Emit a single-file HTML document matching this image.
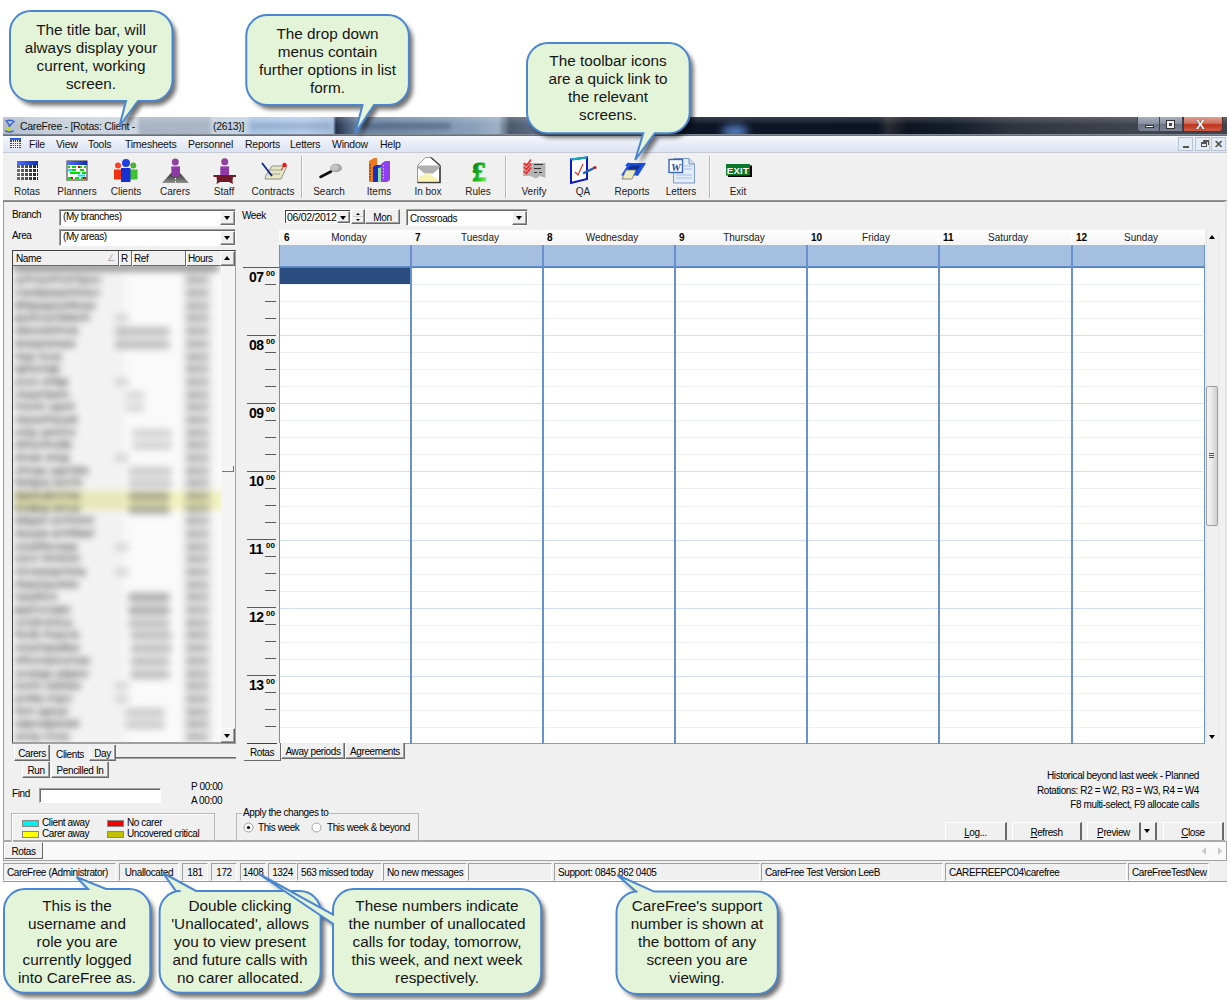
<!DOCTYPE html><html><head><meta charset="utf-8"><style>
*{margin:0;padding:0;box-sizing:border-box}
html,body{width:1230px;height:1000px;overflow:hidden;background:#fff;font-family:"Liberation Sans",sans-serif;font-size:10px;color:#000;letter-spacing:-0.4px}
.a{position:absolute}
.t{position:absolute;white-space:nowrap;line-height:1}
.combo{position:absolute;background:#fff;border:1px solid;border-color:#a0a0a0 #fff #fff #a0a0a0;box-shadow:inset 1px 1px 0 #696969}
.cb{position:absolute;top:1px;right:0;bottom:0;width:15px;background:#f0f0f0;border:1px solid;border-color:#fff #696969 #696969 #fff;box-shadow:inset -1px -1px 0 #a0a0a0}
.dn{position:absolute;left:3px;top:4px;width:0;height:0;border-left:3.5px solid transparent;border-right:3.5px solid transparent;border-top:4px solid #000}
.up{position:absolute;width:0;height:0;border-left:3.5px solid transparent;border-right:3.5px solid transparent;border-bottom:4px solid #000}
.btn{position:absolute;background:#f0f0f0;border:1px solid;border-color:#fff #696969 #696969 #fff;box-shadow:inset -1px -1px 0 #a0a0a0}
.sb{position:absolute;top:0;height:19px;border:1px solid;border-color:#a0a0a0 #fff #fff #a0a0a0;padding:4px 0 0 3px;white-space:nowrap;overflow:hidden}
.tab{position:absolute;background:#f0f0f0;border:1px solid;border-color:#fff #696969 #696969 #fff;border-top:none;box-shadow:inset -1px -1px 0 #a0a0a0;text-align:center;white-space:nowrap}
.ct{position:absolute;text-align:center;font-size:15.3px;line-height:17.95px;color:#151515;white-space:nowrap;letter-spacing:0}
</style></head><body>
<div class="a" style="left:3px;top:117px;width:1224px;height:18px;overflow:hidden;background:linear-gradient(90deg,#b0bccb 0,#c6d0db 45px,#cdd6e0 133px,#a9b5c5 138px,#aab6c6 205px,#c6d1dd 210px,#c2d2e6 243px,#a8c4e6 250px,#b4cdec 300px,#a4bcdc 330px,#26324a 333px,#3a4c68 340px,#6c84a2 356px,#7a92ae 420px,#8aa0ba 470px,#9cb0c6 495px,#4a586c 507px,#5c6c84 530px,#4e5c72 590px,#3a465a 640px,#1a2438 670px,#0c1526 690px,#0c1424 875px,#2a2c34 885px,#0e1420 905px,#141c2a 950px,#30343e 1010px,#3a3e48 1080px,#40444e 1134px)"></div>
<div class="a" style="left:3px;top:117px;width:1224px;height:8px;background:linear-gradient(rgba(255,255,255,.18),rgba(255,255,255,0))"></div>
<div class="a" style="left:722px;top:125px;width:26px;height:14px;border-radius:50%;background:#5a88d0;filter:blur(4px);opacity:.9"></div>
<div class="a" style="left:3px;top:134px;width:1224px;height:2px;background:linear-gradient(#8a949e,#5e666f)"></div>
<svg class="a" style="left:0;top:112px" width="20" height="24" viewBox="0 112 20 24"><path d="M5.5 121.5 Q10 119 14.8 121.8" stroke="#3a62c8" stroke-width="1.5" fill="none"/><path d="M13.2 122 Q10 125 7.5 129.5 M7.2 122 Q8.5 124 9.5 126" stroke="#3a62c8" stroke-width="1.4" fill="none"/><path d="M5 130.5 Q9 133.5 13.5 130.8" stroke="#3a62c8" stroke-width="1.5" fill="none"/><ellipse cx="8.6" cy="129" rx="2.1" ry="2.2" fill="#c4d820"/></svg>
<div class="t" style="left:20px;top:121px;font-size:10.5px;color:#111;letter-spacing:-0.3px">CareFree - [Rotas: Client -</div>
<div class="t" style="left:213px;top:121px;font-size:10.5px;color:#111;letter-spacing:-0.3px">(2613)]</div>
<div class="a" style="left:250px;top:123px;width:80px;height:6px;background:#8aa0bc;filter:blur(2px);opacity:.6"></div>
<div class="a" style="left:360px;top:123px;width:90px;height:6px;background:#485a74;filter:blur(2px);opacity:.6"></div>
<div class="a" style="left:1137px;top:117px;width:23px;height:15px;border:1px solid #3c4450;border-top:none;border-radius:0 0 0 4px;background:linear-gradient(#a8b0bc,#8890a0 50%,#6a7282 51%,#7a8496)"></div>
<div class="a" style="left:1145px;top:125px;width:9px;height:3px;background:#fff;border:1px solid #333"></div>
<div class="a" style="left:1160px;top:117px;width:23px;height:15px;border:1px solid #3c4450;border-top:none;border-left:none;background:linear-gradient(#a8b0bc,#8890a0 50%,#6a7282 51%,#7a8496)"></div>
<div class="a" style="left:1166px;top:120px;width:9px;height:9px;background:#eee;border:1px solid #333"><div class="a" style="left:2px;top:2px;width:3px;height:3px;background:#444"></div></div>
<div class="a" style="left:1183px;top:117px;width:40px;height:15px;border:1px solid #50302c;border-top:none;border-radius:0 0 4px 0;background:linear-gradient(#e0a090,#d07060 45%,#c0301c 55%,#d06048)"></div>
<div class="t" style="left:1196px;top:118px;font-size:13px;font-weight:bold;color:#fff;text-shadow:0 0 1px #000">X</div>
<div class="a" style="left:3px;top:136px;width:1224px;height:16px;background:linear-gradient(#f4f6fc,#dde3f3)"></div>
<div class="a" style="left:3px;top:152px;width:1224px;height:1px;background:#c5cad3"></div>
<svg class="a" style="left:10px;top:138px" width="11" height="10"><rect x="0" y="0" width="11" height="10" fill="#444"/><rect x="0" y="0" width="11" height="2" fill="#2a5af0"/><path d="M0 4.5H11M0 6.5H11M0 8.5H11M2.5 2V10M4.5 2V10M6.5 2V10M8.5 2V10" stroke="#eee" stroke-width="1"/></svg>
<div class="t" style="left:29px;top:139px;font-size:10.5px;letter-spacing:-0.25px;color:#111">File</div>
<div class="t" style="left:56px;top:139px;font-size:10.5px;letter-spacing:-0.25px;color:#111">View</div>
<div class="t" style="left:88px;top:139px;font-size:10.5px;letter-spacing:-0.25px;color:#111">Tools</div>
<div class="t" style="left:125px;top:139px;font-size:10.5px;letter-spacing:-0.25px;color:#111">Timesheets</div>
<div class="t" style="left:188px;top:139px;font-size:10.5px;letter-spacing:-0.25px;color:#111">Personnel</div>
<div class="t" style="left:245px;top:139px;font-size:10.5px;letter-spacing:-0.25px;color:#111">Reports</div>
<div class="t" style="left:290px;top:139px;font-size:10.5px;letter-spacing:-0.25px;color:#111">Letters</div>
<div class="t" style="left:332px;top:139px;font-size:10.5px;letter-spacing:-0.25px;color:#111">Window</div>
<div class="t" style="left:380px;top:139px;font-size:10.5px;letter-spacing:-0.25px;color:#111">Help</div>
<div class="a" style="left:1178px;top:137px;width:15px;height:14px;background:#e4ecf6;border:1px solid #b8c4d4"></div>
<div class="a" style="left:1195px;top:137px;width:15px;height:14px;background:#e4ecf6;border:1px solid #b8c4d4"></div>
<div class="a" style="left:1211px;top:137px;width:15px;height:14px;background:#e4ecf6;border:1px solid #b8c4d4"></div>
<div class="a" style="left:1183px;top:146px;width:6px;height:2px;background:#555"></div>
<div class="a" style="left:1201px;top:142px;width:6px;height:5px;border:1px solid #555;border-top-width:2px"></div><div class="a" style="left:1203px;top:140px;width:6px;height:5px;border-top:2px solid #555;border-right:1px solid #555"></div>
<div class="t" style="left:1214px;top:139px;font-size:11px;font-weight:bold;color:#555">&#x2715;</div>
<div class="a" style="left:3px;top:153px;width:1224px;height:47px;background:#f0f0f0"></div>
<div class="a" style="left:3px;top:200px;width:1224px;height:2px;background:linear-gradient(#9a9a9a,#7c7c7c)"></div>
<div class="t" style="left:-13px;width:80px;text-align:center;top:187px;font-size:10px;color:#222;letter-spacing:0">Rotas</div>
<div class="t" style="left:37px;width:80px;text-align:center;top:187px;font-size:10px;color:#222;letter-spacing:0">Planners</div>
<div class="t" style="left:86px;width:80px;text-align:center;top:187px;font-size:10px;color:#222;letter-spacing:0">Clients</div>
<div class="t" style="left:135px;width:80px;text-align:center;top:187px;font-size:10px;color:#222;letter-spacing:0">Carers</div>
<div class="t" style="left:184px;width:80px;text-align:center;top:187px;font-size:10px;color:#222;letter-spacing:0">Staff</div>
<div class="t" style="left:233px;width:80px;text-align:center;top:187px;font-size:10px;color:#222;letter-spacing:0">Contracts</div>
<div class="t" style="left:289px;width:80px;text-align:center;top:187px;font-size:10px;color:#222;letter-spacing:0">Search</div>
<div class="t" style="left:339px;width:80px;text-align:center;top:187px;font-size:10px;color:#222;letter-spacing:0">Items</div>
<div class="t" style="left:388px;width:80px;text-align:center;top:187px;font-size:10px;color:#222;letter-spacing:0">In box</div>
<div class="t" style="left:438px;width:80px;text-align:center;top:187px;font-size:10px;color:#222;letter-spacing:0">Rules</div>
<div class="t" style="left:494px;width:80px;text-align:center;top:187px;font-size:10px;color:#222;letter-spacing:0">Verify</div>
<div class="t" style="left:543px;width:80px;text-align:center;top:187px;font-size:10px;color:#222;letter-spacing:0">QA</div>
<div class="t" style="left:592px;width:80px;text-align:center;top:187px;font-size:10px;color:#222;letter-spacing:0">Reports</div>
<div class="t" style="left:641px;width:80px;text-align:center;top:187px;font-size:10px;color:#222;letter-spacing:0">Letters</div>
<div class="t" style="left:698px;width:80px;text-align:center;top:187px;font-size:10px;color:#222;letter-spacing:0">Exit</div>
<div class="a" style="left:301px;top:156px;width:1px;height:42px;background:#b4b4b4"></div>
<div class="a" style="left:302px;top:156px;width:1px;height:42px;background:#fff"></div>
<div class="a" style="left:505px;top:156px;width:1px;height:42px;background:#b4b4b4"></div>
<div class="a" style="left:506px;top:156px;width:1px;height:42px;background:#fff"></div>
<div class="a" style="left:709px;top:156px;width:1px;height:42px;background:#b4b4b4"></div>
<div class="a" style="left:710px;top:156px;width:1px;height:42px;background:#fff"></div>
<svg class="a" style="left:0;top:150px" width="800" height="40" viewBox="0 150 800 40">
<defs>
<linearGradient id="gbl" x1="0" x2="1"><stop offset="0" stop-color="#5070ff"/><stop offset="1" stop-color="#1030b0"/></linearGradient>
<linearGradient id="ggr" x1="0" x2="1"><stop offset="0" stop-color="#707070"/><stop offset="1" stop-color="#202020"/></linearGradient>
<linearGradient id="groad" x1="0" y1="0" x2="0" y2="1"><stop offset="0" stop-color="#303030"/><stop offset="1" stop-color="#909090"/></linearGradient>
<linearGradient id="gpound" x1="0" y1="0" x2="1" y2="1"><stop offset="0" stop-color="#006010"/><stop offset=".6" stop-color="#20c020"/><stop offset="1" stop-color="#a0ff60"/></linearGradient>
</defs>
<!-- Rotas -->
<rect x="17" y="161" width="21" height="19" fill="url(#ggr)"/>
<rect x="17" y="161" width="21" height="4" fill="url(#gbl)"/>
<g stroke="#fff" stroke-width="1">
<path d="M17 168.5H38M17 172.5H38M17 176.5H38M20.5 165V180M24.5 165V180M28.5 165V180M32.5 165V180M36.5 165V180"/>
</g>
<!-- Planners -->
<rect x="67" y="161" width="20" height="19" fill="#fff" stroke="#333" stroke-width="1"/>
<rect x="67" y="161" width="20" height="4" fill="url(#gbl)"/>
<g stroke-width="2.2">
<path d="M68 167H70M72 167H76M80 167H82M84 167H86M72 170H76M80 170H84M70 173H80M82 173H86M68 178H71M75 178H79M81 178H83" stroke="#00e000"/>
<path d="M68 170H72M78 175.5H85" stroke="#10e0f0"/>
<path d="M78 167H80M71 178H73M83 178H86" stroke="#e00000"/>
</g>
<!-- Clients -->
<circle cx="118" cy="165.5" r="3" fill="#ff4020"/>
<rect x="114" y="169.5" width="7.5" height="10" fill="#f03010"/>
<circle cx="133.3" cy="165.5" r="3" fill="#50b030"/>
<rect x="130" y="169.5" width="7.5" height="10" fill="#40c030"/>
<circle cx="126" cy="163" r="4" fill="#2040e0"/>
<rect x="121" y="168" width="9.5" height="14" fill="#1830d0"/>
<!-- Carers -->
<path d="M162 183 L171 173 L180 173 L189 183 Z" fill="url(#groad)"/>
<circle cx="175.3" cy="162" r="3.5" fill="#9040a0"/>
<rect x="171.3" y="166.4" width="8.7" height="10" fill="#9038a8"/>
<path d="M175.5 178V179.5M175.5 181V182.5" stroke="#fff" stroke-width="1"/>
<!-- Staff -->
<circle cx="224.7" cy="161.7" r="3.5" fill="#9040a0"/>
<rect x="220.3" y="166.4" width="8.7" height="9" fill="#9038a8"/>
<path d="M213.5 175H236V177H233Q232 181 233 184L229 182H220L216.5 184Q217.5 181 216.5 177H213.5Z" fill="#701a28"/>
<!-- Contracts -->
<path d="M266 175 L272 166 L287 166 L281 179 L265 179Z" fill="#e8e8c0" stroke="#909090" stroke-width="1"/>
<path d="M270 170H283M268 174H280" stroke="#a0a0a0" stroke-width="1.2"/>
<path d="M262 163 L272 176" stroke="#102880" stroke-width="1.8"/>
<circle cx="284.5" cy="165" r="2.2" fill="#ff1010"/>
<path d="M284 166 L281 170" stroke="#c02020" stroke-width="1"/>
<!-- Search -->
<path d="M320.5 177 L331 171.5" stroke="#111" stroke-width="2.6" stroke-linecap="round"/>
<ellipse cx="336" cy="168" rx="6" ry="4.3" fill="#a8a8a8"/>
<ellipse cx="334.5" cy="167.5" rx="4" ry="3" fill="#c4c4c4"/>
<!-- Items -->
<path d="M369 161 L374 158 L377 158 L377 182 L369 182Z" fill="#f07820"/>
<path d="M370 164V180" stroke="#603000" stroke-width="1" stroke-dasharray="2 1"/>
<path d="M373 167 L376 165 L381 165 L381 182 L373 182Z" fill="#1830c0"/>
<path d="M378 168 L382 167 L383 182 L378 182Z" fill="#90e0a0"/>
<path d="M381 164 L385 161 L390 161 L390 180 L387 182 L381 182Z" fill="#9040f0"/>
<path d="M383.5 165V180" stroke="#e0c0ff" stroke-width="1" stroke-dasharray="1.5 1.5"/>
<!-- In box -->
<path d="M417.5 165.5 L425.5 157.5 L431 157.5 L440 165.5 L440 182.5 L417.5 182.5Z" fill="#fff" stroke="#9a9a9a" stroke-width="1"/>
<path d="M440 165.5 L440 182.5 L417.5 182.5" fill="none" stroke="#404040" stroke-width="1.6"/>
<path d="M431 157.5 L440 165.5" stroke="#404040" stroke-width="1.3"/>
<path d="M418 165.5 H439.5 V168 L433 173.5 H424.5 L418 168Z" fill="#b0b0b0"/>
<path d="M419 177 L428 173 L439 181 L418 181Z" fill="#f6f0a0" opacity=".8"/>
<!-- Rules -->
<text x="479" y="180.5" text-anchor="middle" font-family="Liberation Serif" font-weight="bold" font-size="28" fill="url(#gpound)" stroke="url(#gpound)" stroke-width="1.2">&#163;</text>
<!-- Verify -->
<path d="M523 163 H545.5 V178 L540 176 L536 178.5 L530 176 H523Z" fill="#b4b4b4"/>
<path d="M534 164.5H543M534 168.5H541M534 172.5H537M539 172.5H542" stroke="#333" stroke-width="1.2"/>
<path d="M524 163 L526.5 165.5 L531 159.5M524 167 L526.5 169.5 L531 163.5M524 171 L526.5 173.5 L531 167.5" stroke="#ff2020" stroke-width="1.5" fill="none"/>
<!-- QA -->
<path d="M571 159.5 L587 157.5 L587 179 L571 183Z" fill="#fff" stroke="#0a1ac0" stroke-width="2"/>
<path d="M571 159.5 L587 157.5" stroke="#10b0c0" stroke-width="2"/>
<path d="M575 172 L578 175 L583 164" stroke="#e03020" stroke-width="1.2" fill="none"/>
<path d="M583 173.5 L595 167.5" stroke="#2060c0" stroke-width="2.4"/>
<circle cx="595" cy="167.5" r="1.6" fill="#c02020"/>
<!-- Reports -->
<path d="M629 163 L645 163 L637 175.5 L621 175.5Z" fill="#1a50e8"/>
<path d="M631 165.5 L641 165.5 L635 172.5 L625 172.5Z" fill="#103090"/>
<path d="M626 170 L636 170 L632 179 L622 179Z" fill="#ecebc0" stroke="#707070" stroke-width=".8"/>
<path d="M626 166 L629 163 M645 163 L637 175.5" stroke="#1a50e8" stroke-width="2"/>
<!-- Letters -->
<path d="M673.5 158.5 H689 L694.5 164 V183 H673.5Z" fill="#e4ecf8" stroke="#7a9ac8" stroke-width="1"/>
<path d="M689 158.5 V164 H694.5" fill="#c8d8f0" stroke="#7a9ac8" stroke-width="1"/>
<path d="M684 166H692M684 169H692M676 175H692M676 178H692" stroke="#a8c0e4" stroke-width="1.2"/>
<rect x="669" y="159.5" width="13.5" height="13" fill="#fff" stroke="#3a62b8" stroke-width="1.4"/>
<text x="675.7" y="170.5" text-anchor="middle" font-family="Liberation Serif" font-weight="bold" font-style="italic" font-size="11" fill="#2a4aa0">W</text>
<!-- Exit -->
<rect x="728" y="165.5" width="24" height="11.5" fill="#000"/>
<rect x="726" y="164" width="24" height="11.5" fill="#0a7a2a"/>
<text x="738" y="174" text-anchor="middle" font-family="Liberation Sans" font-weight="bold" font-size="9.5" fill="#fff" letter-spacing=".3">EXIT</text>
</svg>

<div class="a" style="left:3px;top:202px;width:1224px;height:638px;background:#f0f0f0;border-left:1px solid #9a9a9a"></div>
<div class="a" style="left:3px;top:840px;width:1224px;height:2px;background:#a8a8a8"></div>
<div class="t" style="left:12px;top:210px">Branch</div>
<div class="t" style="left:12px;top:231px">Area</div>
<div class="combo" style="left:59px;top:209px;width:177px;height:17px"><div class="t" style="left:3px;top:2px;font-size:10px">(My branches)</div><div class="cb"><div class="dn"></div></div></div>
<div class="combo" style="left:59px;top:229px;width:177px;height:17px"><div class="t" style="left:3px;top:2px;font-size:10px">(My areas)</div><div class="cb"><div class="dn"></div></div></div>
<div class="a" style="left:12px;top:250px;width:224px;height:493px;background:#fff;border:1px solid;border-color:#404040 #a0a0a0 #a0a0a0 #404040"></div>
<div class="a" style="left:13px;top:251px;width:222px;height:15px;background:#f0f0f0;border-bottom:1px solid #696969"></div>
<div class="a" style="left:118px;top:251px;width:2px;height:15px;background:#696969;border-right:1px solid #fff"></div>
<div class="a" style="left:131px;top:251px;width:2px;height:15px;background:#696969;border-right:1px solid #fff"></div>
<div class="a" style="left:185px;top:251px;width:2px;height:15px;background:#696969;border-right:1px solid #fff"></div>
<div class="t" style="left:16px;top:254px">Name</div><div class="t" style="left:121px;top:254px">R</div><div class="t" style="left:134px;top:254px">Ref</div><div class="t" style="left:188px;top:254px">Hours</div>
<div class="t" style="left:107px;top:254px;color:#aaa;font-size:9px">&#x2220;</div>
<div class="btn" style="left:220px;top:251px;width:15px;height:15px"><div class="up" style="left:3px;top:4px"></div></div>
<div class="a" style="left:221px;top:266px;width:14px;height:462px;background:#f4f4f4"></div>
<div class="btn" style="left:220px;top:728px;width:15px;height:15px"><div class="dn" style="left:3px;top:5px"></div></div>
<div class="a" style="left:222px;top:466px;width:12px;height:6px;border-bottom:1px solid #777;border-right:1px solid #777"></div>
<div class="a" style="left:13px;top:266px;width:208px;height:476px;overflow:hidden;background:#fafafa"><div class="a" style="left:-6px;top:-6px;width:220px;height:490px;filter:blur(3.6px)"><div class="a" style="left:6px;top:6px;width:112px;height:476px;background:#f2f2f2"></div><div class="a" style="left:176px;top:6px;width:30px;height:476px;background:#e8e8e8"></div><div class="a" style="left:6px;top:4px;width:206px;height:7px;background:#888"></div><div class="a" style="left:8px;top:17.4px;width:4px;height:7px;background:#959595"></div><div class="a" style="left:13px;top:17.4px;width:3px;height:7px;background:#959595"></div><div class="a" style="left:17px;top:16.4px;width:4px;height:6px;background:#808080"></div><div class="a" style="left:22px;top:16.4px;width:4px;height:6px;background:#959595"></div><div class="a" style="left:27px;top:17.4px;width:3px;height:6px;background:#959595"></div><div class="a" style="left:31px;top:17.4px;width:3px;height:6px;background:#808080"></div><div class="a" style="left:35px;top:17.4px;width:3px;height:7px;background:#8a8a8a"></div><div class="a" style="left:39px;top:17.4px;width:4px;height:6px;background:#959595"></div><div class="a" style="left:44px;top:16.4px;width:4px;height:6px;background:#808080"></div><div class="a" style="left:49px;top:16.4px;width:4px;height:6px;background:#959595"></div><div class="a" style="left:54px;top:17.4px;width:3px;height:6px;background:#959595"></div><div class="a" style="left:58px;top:17.4px;width:5px;height:6px;background:#8a8a8a"></div><div class="a" style="left:64px;top:16.4px;width:4px;height:6px;background:#959595"></div><div class="a" style="left:69px;top:16.4px;width:4px;height:6px;background:#8a8a8a"></div><div class="a" style="left:74px;top:17.4px;width:4px;height:7px;background:#808080"></div><div class="a" style="left:79px;top:17.4px;width:3px;height:7px;background:#8a8a8a"></div><div class="a" style="left:83px;top:17.4px;width:4px;height:6px;background:#959595"></div><div class="a" style="left:88px;top:17.4px;width:3px;height:6px;background:#8a8a8a"></div><div class="a" style="left:92px;top:17.4px;width:2px;height:6px;background:#959595"></div><div class="a" style="left:180px;top:17.4px;width:4px;height:6px;background:#959595"></div><div class="a" style="left:185px;top:17.4px;width:4px;height:6px;background:#959595"></div><div class="a" style="left:190px;top:17.4px;width:4px;height:6px;background:#959595"></div><div class="a" style="left:196px;top:17.4px;width:4px;height:6px;background:#959595"></div><div class="a" style="left:8px;top:30.1px;width:3px;height:6px;background:#8a8a8a"></div><div class="a" style="left:12px;top:29.1px;width:3px;height:6px;background:#959595"></div><div class="a" style="left:16px;top:30.1px;width:6px;height:6px;background:#8a8a8a"></div><div class="a" style="left:23px;top:30.1px;width:5px;height:6px;background:#8a8a8a"></div><div class="a" style="left:29px;top:29.1px;width:4px;height:7px;background:#808080"></div><div class="a" style="left:34px;top:30.1px;width:4px;height:7px;background:#808080"></div><div class="a" style="left:39px;top:30.1px;width:5px;height:6px;background:#808080"></div><div class="a" style="left:45px;top:30.1px;width:4px;height:6px;background:#808080"></div><div class="a" style="left:50px;top:30.1px;width:5px;height:7px;background:#8a8a8a"></div><div class="a" style="left:56px;top:30.1px;width:4px;height:6px;background:#808080"></div><div class="a" style="left:61px;top:29.1px;width:4px;height:7px;background:#959595"></div><div class="a" style="left:66px;top:29.1px;width:4px;height:6px;background:#808080"></div><div class="a" style="left:71px;top:29.1px;width:4px;height:7px;background:#959595"></div><div class="a" style="left:76px;top:30.1px;width:4px;height:6px;background:#808080"></div><div class="a" style="left:81px;top:30.1px;width:6px;height:6px;background:#959595"></div><div class="a" style="left:88px;top:30.1px;width:3px;height:6px;background:#959595"></div><div class="a" style="left:92px;top:30.1px;width:1px;height:6px;background:#808080"></div><div class="a" style="left:180px;top:30.1px;width:4px;height:6px;background:#959595"></div><div class="a" style="left:185px;top:30.1px;width:4px;height:6px;background:#959595"></div><div class="a" style="left:190px;top:30.1px;width:4px;height:6px;background:#959595"></div><div class="a" style="left:196px;top:30.1px;width:4px;height:6px;background:#959595"></div><div class="a" style="left:8px;top:41.7px;width:5px;height:7px;background:#808080"></div><div class="a" style="left:14px;top:41.7px;width:5px;height:6px;background:#808080"></div><div class="a" style="left:20px;top:41.7px;width:3px;height:7px;background:#808080"></div><div class="a" style="left:24px;top:42.7px;width:4px;height:7px;background:#808080"></div><div class="a" style="left:29px;top:42.7px;width:6px;height:6px;background:#8a8a8a"></div><div class="a" style="left:36px;top:42.7px;width:6px;height:7px;background:#8a8a8a"></div><div class="a" style="left:43px;top:42.7px;width:5px;height:6px;background:#808080"></div><div class="a" style="left:49px;top:42.7px;width:3px;height:6px;background:#8a8a8a"></div><div class="a" style="left:53px;top:42.7px;width:4px;height:7px;background:#959595"></div><div class="a" style="left:58px;top:41.7px;width:4px;height:6px;background:#808080"></div><div class="a" style="left:63px;top:41.7px;width:6px;height:6px;background:#808080"></div><div class="a" style="left:70px;top:42.7px;width:4px;height:6px;background:#8a8a8a"></div><div class="a" style="left:75px;top:42.7px;width:4px;height:6px;background:#8a8a8a"></div><div class="a" style="left:80px;top:42.7px;width:4px;height:6px;background:#808080"></div><div class="a" style="left:85px;top:42.7px;width:3px;height:6px;background:#808080"></div><div class="a" style="left:180px;top:42.7px;width:4px;height:6px;background:#959595"></div><div class="a" style="left:185px;top:42.7px;width:4px;height:6px;background:#959595"></div><div class="a" style="left:190px;top:42.7px;width:4px;height:6px;background:#959595"></div><div class="a" style="left:196px;top:42.7px;width:4px;height:6px;background:#959595"></div><div class="a" style="left:8px;top:55.4px;width:5px;height:7px;background:#808080"></div><div class="a" style="left:14px;top:55.4px;width:4px;height:7px;background:#959595"></div><div class="a" style="left:19px;top:55.4px;width:4px;height:6px;background:#8a8a8a"></div><div class="a" style="left:24px;top:54.4px;width:4px;height:7px;background:#8a8a8a"></div><div class="a" style="left:29px;top:55.4px;width:4px;height:6px;background:#959595"></div><div class="a" style="left:34px;top:55.4px;width:3px;height:6px;background:#959595"></div><div class="a" style="left:38px;top:55.4px;width:3px;height:7px;background:#8a8a8a"></div><div class="a" style="left:42px;top:55.4px;width:4px;height:7px;background:#959595"></div><div class="a" style="left:47px;top:54.4px;width:4px;height:6px;background:#959595"></div><div class="a" style="left:52px;top:55.4px;width:5px;height:6px;background:#808080"></div><div class="a" style="left:58px;top:54.4px;width:4px;height:7px;background:#808080"></div><div class="a" style="left:63px;top:55.4px;width:6px;height:6px;background:#808080"></div><div class="a" style="left:70px;top:55.4px;width:6px;height:6px;background:#959595"></div><div class="a" style="left:77px;top:54.4px;width:4px;height:6px;background:#808080"></div><div class="a" style="left:82px;top:55.4px;width:1px;height:6px;background:#808080"></div><div class="a" style="left:180px;top:55.4px;width:4px;height:6px;background:#959595"></div><div class="a" style="left:185px;top:55.4px;width:4px;height:6px;background:#959595"></div><div class="a" style="left:190px;top:55.4px;width:4px;height:6px;background:#959595"></div><div class="a" style="left:196px;top:55.4px;width:4px;height:6px;background:#959595"></div><div class="a" style="left:108px;top:54.4px;width:14px;height:8px;background:#606060;opacity:.2"></div><div class="a" style="left:8px;top:68.1px;width:4px;height:6px;background:#808080"></div><div class="a" style="left:13px;top:67.1px;width:3px;height:7px;background:#808080"></div><div class="a" style="left:17px;top:68.1px;width:6px;height:6px;background:#808080"></div><div class="a" style="left:24px;top:68.1px;width:3px;height:6px;background:#8a8a8a"></div><div class="a" style="left:28px;top:68.1px;width:6px;height:6px;background:#959595"></div><div class="a" style="left:35px;top:68.1px;width:4px;height:6px;background:#808080"></div><div class="a" style="left:40px;top:68.1px;width:5px;height:6px;background:#808080"></div><div class="a" style="left:46px;top:67.1px;width:4px;height:6px;background:#808080"></div><div class="a" style="left:51px;top:67.1px;width:6px;height:6px;background:#959595"></div><div class="a" style="left:58px;top:68.1px;width:6px;height:6px;background:#959595"></div><div class="a" style="left:65px;top:67.1px;width:3px;height:7px;background:#808080"></div><div class="a" style="left:69px;top:68.1px;width:2px;height:7px;background:#808080"></div><div class="a" style="left:180px;top:68.1px;width:4px;height:6px;background:#959595"></div><div class="a" style="left:185px;top:68.1px;width:4px;height:6px;background:#959595"></div><div class="a" style="left:190px;top:68.1px;width:4px;height:6px;background:#959595"></div><div class="a" style="left:196px;top:68.1px;width:4px;height:6px;background:#959595"></div><div class="a" style="left:108px;top:67.1px;width:55px;height:9px;background:#6a6a6a;opacity:0.41;border-radius:4px"></div><div class="a" style="left:8px;top:80.8px;width:6px;height:6px;background:#808080"></div><div class="a" style="left:15px;top:80.8px;width:4px;height:6px;background:#8a8a8a"></div><div class="a" style="left:20px;top:80.8px;width:6px;height:6px;background:#8a8a8a"></div><div class="a" style="left:27px;top:80.8px;width:6px;height:7px;background:#8a8a8a"></div><div class="a" style="left:34px;top:80.8px;width:4px;height:6px;background:#8a8a8a"></div><div class="a" style="left:39px;top:80.8px;width:3px;height:6px;background:#808080"></div><div class="a" style="left:43px;top:80.8px;width:4px;height:6px;background:#808080"></div><div class="a" style="left:48px;top:79.8px;width:4px;height:6px;background:#8a8a8a"></div><div class="a" style="left:53px;top:80.8px;width:4px;height:7px;background:#8a8a8a"></div><div class="a" style="left:58px;top:80.8px;width:4px;height:6px;background:#808080"></div><div class="a" style="left:63px;top:80.8px;width:5px;height:6px;background:#8a8a8a"></div><div class="a" style="left:180px;top:80.8px;width:4px;height:6px;background:#959595"></div><div class="a" style="left:185px;top:80.8px;width:4px;height:6px;background:#959595"></div><div class="a" style="left:190px;top:80.8px;width:4px;height:6px;background:#959595"></div><div class="a" style="left:196px;top:80.8px;width:4px;height:6px;background:#959595"></div><div class="a" style="left:108px;top:79.8px;width:55px;height:9px;background:#6a6a6a;opacity:0.41;border-radius:4px"></div><div class="a" style="left:8px;top:92.5px;width:4px;height:6px;background:#8a8a8a"></div><div class="a" style="left:13px;top:93.5px;width:6px;height:6px;background:#8a8a8a"></div><div class="a" style="left:20px;top:93.5px;width:4px;height:7px;background:#808080"></div><div class="a" style="left:25px;top:93.5px;width:3px;height:6px;background:#808080"></div><div class="a" style="left:32px;top:92.5px;width:4px;height:6px;background:#808080"></div><div class="a" style="left:37px;top:93.5px;width:4px;height:6px;background:#959595"></div><div class="a" style="left:42px;top:93.5px;width:4px;height:6px;background:#959595"></div><div class="a" style="left:47px;top:93.5px;width:6px;height:6px;background:#8a8a8a"></div><div class="a" style="left:54px;top:93.5px;width:1px;height:7px;background:#808080"></div><div class="a" style="left:180px;top:93.5px;width:4px;height:6px;background:#959595"></div><div class="a" style="left:185px;top:93.5px;width:4px;height:6px;background:#959595"></div><div class="a" style="left:190px;top:93.5px;width:4px;height:6px;background:#959595"></div><div class="a" style="left:196px;top:93.5px;width:4px;height:6px;background:#959595"></div><div class="a" style="left:8px;top:106.1px;width:3px;height:6px;background:#808080"></div><div class="a" style="left:12px;top:106.1px;width:6px;height:7px;background:#808080"></div><div class="a" style="left:19px;top:105.1px;width:5px;height:6px;background:#8a8a8a"></div><div class="a" style="left:25px;top:106.1px;width:4px;height:7px;background:#959595"></div><div class="a" style="left:30px;top:106.1px;width:4px;height:6px;background:#8a8a8a"></div><div class="a" style="left:35px;top:105.1px;width:3px;height:6px;background:#959595"></div><div class="a" style="left:39px;top:106.1px;width:4px;height:7px;background:#8a8a8a"></div><div class="a" style="left:44px;top:106.1px;width:6px;height:7px;background:#808080"></div><div class="a" style="left:51px;top:105.1px;width:2px;height:7px;background:#959595"></div><div class="a" style="left:180px;top:106.1px;width:4px;height:6px;background:#959595"></div><div class="a" style="left:185px;top:106.1px;width:4px;height:6px;background:#959595"></div><div class="a" style="left:190px;top:106.1px;width:4px;height:6px;background:#959595"></div><div class="a" style="left:196px;top:106.1px;width:4px;height:6px;background:#959595"></div><div class="a" style="left:8px;top:118.8px;width:4px;height:7px;background:#8a8a8a"></div><div class="a" style="left:13px;top:118.8px;width:3px;height:6px;background:#959595"></div><div class="a" style="left:17px;top:118.8px;width:5px;height:6px;background:#959595"></div><div class="a" style="left:23px;top:118.8px;width:4px;height:6px;background:#8a8a8a"></div><div class="a" style="left:28px;top:118.8px;width:4px;height:6px;background:#959595"></div><div class="a" style="left:36px;top:118.8px;width:5px;height:6px;background:#808080"></div><div class="a" style="left:42px;top:117.8px;width:3px;height:6px;background:#8a8a8a"></div><div class="a" style="left:46px;top:117.8px;width:5px;height:7px;background:#8a8a8a"></div><div class="a" style="left:52px;top:118.8px;width:6px;height:7px;background:#808080"></div><div class="a" style="left:59px;top:117.8px;width:2px;height:7px;background:#8a8a8a"></div><div class="a" style="left:180px;top:118.8px;width:4px;height:6px;background:#959595"></div><div class="a" style="left:185px;top:118.8px;width:4px;height:6px;background:#959595"></div><div class="a" style="left:190px;top:118.8px;width:4px;height:6px;background:#959595"></div><div class="a" style="left:196px;top:118.8px;width:4px;height:6px;background:#959595"></div><div class="a" style="left:108px;top:117.8px;width:14px;height:8px;background:#606060;opacity:.2"></div><div class="a" style="left:8px;top:131.5px;width:4px;height:6px;background:#959595"></div><div class="a" style="left:13px;top:130.5px;width:4px;height:6px;background:#8a8a8a"></div><div class="a" style="left:18px;top:131.5px;width:4px;height:7px;background:#8a8a8a"></div><div class="a" style="left:23px;top:131.5px;width:3px;height:6px;background:#808080"></div><div class="a" style="left:27px;top:131.5px;width:4px;height:7px;background:#8a8a8a"></div><div class="a" style="left:32px;top:130.5px;width:3px;height:6px;background:#8a8a8a"></div><div class="a" style="left:36px;top:130.5px;width:3px;height:6px;background:#808080"></div><div class="a" style="left:40px;top:131.5px;width:6px;height:6px;background:#808080"></div><div class="a" style="left:47px;top:131.5px;width:6px;height:6px;background:#8a8a8a"></div><div class="a" style="left:54px;top:130.5px;width:4px;height:6px;background:#808080"></div><div class="a" style="left:59px;top:131.5px;width:3px;height:6px;background:#959595"></div><div class="a" style="left:180px;top:131.5px;width:4px;height:6px;background:#959595"></div><div class="a" style="left:185px;top:131.5px;width:4px;height:6px;background:#959595"></div><div class="a" style="left:190px;top:131.5px;width:4px;height:6px;background:#959595"></div><div class="a" style="left:196px;top:131.5px;width:4px;height:6px;background:#959595"></div><div class="a" style="left:118px;top:130.5px;width:20px;height:9px;background:#6a6a6a;opacity:0.23;border-radius:4px"></div><div class="a" style="left:8px;top:143.2px;width:6px;height:6px;background:#959595"></div><div class="a" style="left:15px;top:144.2px;width:6px;height:6px;background:#959595"></div><div class="a" style="left:22px;top:144.2px;width:6px;height:6px;background:#959595"></div><div class="a" style="left:29px;top:143.2px;width:4px;height:7px;background:#959595"></div><div class="a" style="left:34px;top:144.2px;width:4px;height:6px;background:#8a8a8a"></div><div class="a" style="left:42px;top:144.2px;width:3px;height:6px;background:#959595"></div><div class="a" style="left:46px;top:144.2px;width:4px;height:7px;background:#808080"></div><div class="a" style="left:51px;top:144.2px;width:6px;height:7px;background:#959595"></div><div class="a" style="left:58px;top:144.2px;width:3px;height:6px;background:#808080"></div><div class="a" style="left:62px;top:143.2px;width:4px;height:6px;background:#808080"></div><div class="a" style="left:67px;top:144.2px;width:1px;height:6px;background:#8a8a8a"></div><div class="a" style="left:180px;top:144.2px;width:4px;height:6px;background:#959595"></div><div class="a" style="left:185px;top:144.2px;width:4px;height:6px;background:#959595"></div><div class="a" style="left:190px;top:144.2px;width:4px;height:6px;background:#959595"></div><div class="a" style="left:196px;top:144.2px;width:4px;height:6px;background:#959595"></div><div class="a" style="left:118px;top:143.2px;width:20px;height:9px;background:#6a6a6a;opacity:0.23;border-radius:4px"></div><div class="a" style="left:8px;top:156.9px;width:4px;height:6px;background:#959595"></div><div class="a" style="left:13px;top:155.9px;width:4px;height:7px;background:#8a8a8a"></div><div class="a" style="left:18px;top:156.9px;width:4px;height:7px;background:#8a8a8a"></div><div class="a" style="left:23px;top:156.9px;width:3px;height:6px;background:#808080"></div><div class="a" style="left:27px;top:156.9px;width:4px;height:7px;background:#959595"></div><div class="a" style="left:32px;top:156.9px;width:4px;height:6px;background:#808080"></div><div class="a" style="left:37px;top:155.9px;width:6px;height:6px;background:#8a8a8a"></div><div class="a" style="left:44px;top:155.9px;width:3px;height:7px;background:#959595"></div><div class="a" style="left:48px;top:156.9px;width:5px;height:6px;background:#808080"></div><div class="a" style="left:54px;top:156.9px;width:3px;height:7px;background:#959595"></div><div class="a" style="left:58px;top:156.9px;width:4px;height:7px;background:#959595"></div><div class="a" style="left:63px;top:155.9px;width:6px;height:7px;background:#8a8a8a"></div><div class="a" style="left:70px;top:156.9px;width:1px;height:6px;background:#8a8a8a"></div><div class="a" style="left:180px;top:156.9px;width:4px;height:6px;background:#959595"></div><div class="a" style="left:185px;top:156.9px;width:4px;height:6px;background:#959595"></div><div class="a" style="left:190px;top:156.9px;width:4px;height:6px;background:#959595"></div><div class="a" style="left:196px;top:156.9px;width:4px;height:6px;background:#959595"></div><div class="a" style="left:8px;top:169.5px;width:3px;height:6px;background:#8a8a8a"></div><div class="a" style="left:12px;top:169.5px;width:4px;height:6px;background:#8a8a8a"></div><div class="a" style="left:17px;top:168.5px;width:4px;height:6px;background:#8a8a8a"></div><div class="a" style="left:22px;top:169.5px;width:4px;height:7px;background:#808080"></div><div class="a" style="left:27px;top:169.5px;width:3px;height:7px;background:#8a8a8a"></div><div class="a" style="left:34px;top:169.5px;width:5px;height:6px;background:#808080"></div><div class="a" style="left:40px;top:169.5px;width:4px;height:6px;background:#808080"></div><div class="a" style="left:45px;top:168.5px;width:4px;height:6px;background:#8a8a8a"></div><div class="a" style="left:50px;top:168.5px;width:4px;height:7px;background:#959595"></div><div class="a" style="left:55px;top:168.5px;width:4px;height:6px;background:#8a8a8a"></div><div class="a" style="left:60px;top:169.5px;width:3px;height:6px;background:#959595"></div><div class="a" style="left:64px;top:168.5px;width:4px;height:7px;background:#959595"></div><div class="a" style="left:180px;top:169.5px;width:4px;height:6px;background:#959595"></div><div class="a" style="left:185px;top:169.5px;width:4px;height:6px;background:#959595"></div><div class="a" style="left:190px;top:169.5px;width:4px;height:6px;background:#959595"></div><div class="a" style="left:196px;top:169.5px;width:4px;height:6px;background:#959595"></div><div class="a" style="left:125px;top:168.5px;width:40px;height:9px;background:#6a6a6a;opacity:0.27;border-radius:4px"></div><div class="a" style="left:8px;top:182.2px;width:6px;height:6px;background:#8a8a8a"></div><div class="a" style="left:15px;top:181.2px;width:5px;height:6px;background:#808080"></div><div class="a" style="left:21px;top:182.2px;width:4px;height:6px;background:#8a8a8a"></div><div class="a" style="left:26px;top:182.2px;width:4px;height:6px;background:#8a8a8a"></div><div class="a" style="left:31px;top:182.2px;width:5px;height:6px;background:#959595"></div><div class="a" style="left:37px;top:181.2px;width:5px;height:6px;background:#808080"></div><div class="a" style="left:43px;top:182.2px;width:4px;height:6px;background:#959595"></div><div class="a" style="left:48px;top:182.2px;width:4px;height:6px;background:#8a8a8a"></div><div class="a" style="left:53px;top:181.2px;width:5px;height:7px;background:#808080"></div><div class="a" style="left:59px;top:182.2px;width:4px;height:7px;background:#808080"></div><div class="a" style="left:64px;top:181.2px;width:1px;height:6px;background:#808080"></div><div class="a" style="left:180px;top:182.2px;width:4px;height:6px;background:#959595"></div><div class="a" style="left:185px;top:182.2px;width:4px;height:6px;background:#959595"></div><div class="a" style="left:190px;top:182.2px;width:4px;height:6px;background:#959595"></div><div class="a" style="left:196px;top:182.2px;width:4px;height:6px;background:#959595"></div><div class="a" style="left:125px;top:181.2px;width:40px;height:9px;background:#6a6a6a;opacity:0.27;border-radius:4px"></div><div class="a" style="left:8px;top:194.9px;width:5px;height:6px;background:#808080"></div><div class="a" style="left:14px;top:193.9px;width:5px;height:6px;background:#8a8a8a"></div><div class="a" style="left:20px;top:194.9px;width:4px;height:6px;background:#959595"></div><div class="a" style="left:25px;top:194.9px;width:6px;height:6px;background:#808080"></div><div class="a" style="left:32px;top:193.9px;width:3px;height:7px;background:#8a8a8a"></div><div class="a" style="left:39px;top:194.9px;width:5px;height:6px;background:#808080"></div><div class="a" style="left:45px;top:193.9px;width:4px;height:6px;background:#8a8a8a"></div><div class="a" style="left:50px;top:194.9px;width:6px;height:7px;background:#959595"></div><div class="a" style="left:57px;top:194.9px;width:5px;height:7px;background:#808080"></div><div class="a" style="left:180px;top:194.9px;width:4px;height:6px;background:#959595"></div><div class="a" style="left:185px;top:194.9px;width:4px;height:6px;background:#959595"></div><div class="a" style="left:190px;top:194.9px;width:4px;height:6px;background:#959595"></div><div class="a" style="left:196px;top:194.9px;width:4px;height:6px;background:#959595"></div><div class="a" style="left:108px;top:193.9px;width:14px;height:8px;background:#606060;opacity:.2"></div><div class="a" style="left:8px;top:207.6px;width:4px;height:6px;background:#959595"></div><div class="a" style="left:13px;top:206.6px;width:5px;height:6px;background:#808080"></div><div class="a" style="left:19px;top:206.6px;width:4px;height:6px;background:#959595"></div><div class="a" style="left:24px;top:207.6px;width:4px;height:6px;background:#959595"></div><div class="a" style="left:29px;top:207.6px;width:5px;height:7px;background:#808080"></div><div class="a" style="left:35px;top:207.6px;width:4px;height:6px;background:#8a8a8a"></div><div class="a" style="left:43px;top:207.6px;width:4px;height:7px;background:#959595"></div><div class="a" style="left:48px;top:207.6px;width:4px;height:7px;background:#8a8a8a"></div><div class="a" style="left:53px;top:207.6px;width:4px;height:7px;background:#808080"></div><div class="a" style="left:58px;top:207.6px;width:3px;height:6px;background:#8a8a8a"></div><div class="a" style="left:62px;top:206.6px;width:3px;height:6px;background:#959595"></div><div class="a" style="left:66px;top:206.6px;width:5px;height:7px;background:#8a8a8a"></div><div class="a" style="left:72px;top:206.6px;width:4px;height:7px;background:#8a8a8a"></div><div class="a" style="left:77px;top:207.6px;width:4px;height:6px;background:#808080"></div><div class="a" style="left:180px;top:207.6px;width:4px;height:6px;background:#959595"></div><div class="a" style="left:185px;top:207.6px;width:4px;height:6px;background:#959595"></div><div class="a" style="left:190px;top:207.6px;width:4px;height:6px;background:#959595"></div><div class="a" style="left:196px;top:207.6px;width:4px;height:6px;background:#959595"></div><div class="a" style="left:121px;top:206.6px;width:44px;height:9px;background:#6a6a6a;opacity:0.32;border-radius:4px"></div><div class="a" style="left:8px;top:219.3px;width:6px;height:6px;background:#808080"></div><div class="a" style="left:15px;top:220.3px;width:4px;height:7px;background:#8a8a8a"></div><div class="a" style="left:20px;top:219.3px;width:4px;height:6px;background:#808080"></div><div class="a" style="left:25px;top:220.3px;width:6px;height:7px;background:#808080"></div><div class="a" style="left:32px;top:220.3px;width:5px;height:6px;background:#959595"></div><div class="a" style="left:38px;top:220.3px;width:4px;height:7px;background:#808080"></div><div class="a" style="left:46px;top:220.3px;width:4px;height:6px;background:#808080"></div><div class="a" style="left:51px;top:220.3px;width:5px;height:6px;background:#8a8a8a"></div><div class="a" style="left:57px;top:220.3px;width:3px;height:6px;background:#8a8a8a"></div><div class="a" style="left:61px;top:219.3px;width:4px;height:6px;background:#959595"></div><div class="a" style="left:66px;top:219.3px;width:5px;height:6px;background:#8a8a8a"></div><div class="a" style="left:72px;top:220.3px;width:3px;height:6px;background:#808080"></div><div class="a" style="left:180px;top:220.3px;width:4px;height:6px;background:#959595"></div><div class="a" style="left:185px;top:220.3px;width:4px;height:6px;background:#959595"></div><div class="a" style="left:190px;top:220.3px;width:4px;height:6px;background:#959595"></div><div class="a" style="left:196px;top:220.3px;width:4px;height:6px;background:#959595"></div><div class="a" style="left:121px;top:219.3px;width:44px;height:9px;background:#6a6a6a;opacity:0.32;border-radius:4px"></div><div class="a" style="left:8px;top:231.9px;width:4px;height:6px;background:#808080"></div><div class="a" style="left:13px;top:232.9px;width:6px;height:7px;background:#8a8a8a"></div><div class="a" style="left:20px;top:232.9px;width:4px;height:6px;background:#808080"></div><div class="a" style="left:25px;top:231.9px;width:5px;height:6px;background:#8a8a8a"></div><div class="a" style="left:31px;top:232.9px;width:4px;height:6px;background:#8a8a8a"></div><div class="a" style="left:36px;top:232.9px;width:3px;height:7px;background:#959595"></div><div class="a" style="left:40px;top:231.9px;width:5px;height:7px;background:#808080"></div><div class="a" style="left:46px;top:231.9px;width:3px;height:6px;background:#959595"></div><div class="a" style="left:50px;top:232.9px;width:4px;height:6px;background:#959595"></div><div class="a" style="left:55px;top:231.9px;width:3px;height:6px;background:#8a8a8a"></div><div class="a" style="left:59px;top:231.9px;width:4px;height:6px;background:#959595"></div><div class="a" style="left:64px;top:231.9px;width:3px;height:7px;background:#8a8a8a"></div><div class="a" style="left:68px;top:232.9px;width:5px;height:6px;background:#8a8a8a"></div><div class="a" style="left:180px;top:232.9px;width:4px;height:6px;background:#959595"></div><div class="a" style="left:185px;top:232.9px;width:4px;height:6px;background:#959595"></div><div class="a" style="left:190px;top:232.9px;width:4px;height:6px;background:#959595"></div><div class="a" style="left:196px;top:232.9px;width:4px;height:6px;background:#959595"></div><div class="a" style="left:121px;top:231.9px;width:42px;height:9px;background:#6a6a6a;opacity:0.54;border-radius:4px"></div><div class="a" style="left:8px;top:244.6px;width:5px;height:6px;background:#808080"></div><div class="a" style="left:14px;top:245.6px;width:4px;height:6px;background:#959595"></div><div class="a" style="left:19px;top:245.6px;width:4px;height:6px;background:#8a8a8a"></div><div class="a" style="left:24px;top:244.6px;width:6px;height:7px;background:#808080"></div><div class="a" style="left:31px;top:245.6px;width:4px;height:6px;background:#8a8a8a"></div><div class="a" style="left:36px;top:245.6px;width:6px;height:7px;background:#8a8a8a"></div><div class="a" style="left:46px;top:244.6px;width:3px;height:7px;background:#808080"></div><div class="a" style="left:50px;top:245.6px;width:5px;height:6px;background:#8a8a8a"></div><div class="a" style="left:56px;top:244.6px;width:4px;height:6px;background:#959595"></div><div class="a" style="left:61px;top:245.6px;width:4px;height:6px;background:#959595"></div><div class="a" style="left:66px;top:245.6px;width:3px;height:7px;background:#8a8a8a"></div><div class="a" style="left:70px;top:244.6px;width:3px;height:7px;background:#8a8a8a"></div><div class="a" style="left:180px;top:245.6px;width:4px;height:6px;background:#959595"></div><div class="a" style="left:185px;top:245.6px;width:4px;height:6px;background:#959595"></div><div class="a" style="left:190px;top:245.6px;width:4px;height:6px;background:#959595"></div><div class="a" style="left:196px;top:245.6px;width:4px;height:6px;background:#959595"></div><div class="a" style="left:121px;top:244.6px;width:42px;height:9px;background:#6a6a6a;opacity:0.54;border-radius:4px"></div><div class="a" style="left:8px;top:257.3px;width:4px;height:7px;background:#8a8a8a"></div><div class="a" style="left:13px;top:257.3px;width:6px;height:7px;background:#8a8a8a"></div><div class="a" style="left:20px;top:258.3px;width:4px;height:7px;background:#808080"></div><div class="a" style="left:25px;top:258.3px;width:5px;height:7px;background:#8a8a8a"></div><div class="a" style="left:31px;top:258.3px;width:4px;height:6px;background:#808080"></div><div class="a" style="left:36px;top:257.3px;width:4px;height:7px;background:#959595"></div><div class="a" style="left:44px;top:258.3px;width:4px;height:6px;background:#808080"></div><div class="a" style="left:49px;top:258.3px;width:5px;height:6px;background:#959595"></div><div class="a" style="left:55px;top:257.3px;width:3px;height:6px;background:#959595"></div><div class="a" style="left:59px;top:257.3px;width:4px;height:6px;background:#808080"></div><div class="a" style="left:64px;top:257.3px;width:3px;height:7px;background:#959595"></div><div class="a" style="left:68px;top:258.3px;width:4px;height:6px;background:#8a8a8a"></div><div class="a" style="left:73px;top:257.3px;width:4px;height:6px;background:#808080"></div><div class="a" style="left:78px;top:258.3px;width:3px;height:6px;background:#808080"></div><div class="a" style="left:82px;top:257.3px;width:5px;height:6px;background:#959595"></div><div class="a" style="left:180px;top:258.3px;width:4px;height:6px;background:#959595"></div><div class="a" style="left:185px;top:258.3px;width:4px;height:6px;background:#959595"></div><div class="a" style="left:190px;top:258.3px;width:4px;height:6px;background:#959595"></div><div class="a" style="left:196px;top:258.3px;width:4px;height:6px;background:#959595"></div><div class="a" style="left:8px;top:270.0px;width:6px;height:7px;background:#959595"></div><div class="a" style="left:15px;top:271.0px;width:4px;height:7px;background:#8a8a8a"></div><div class="a" style="left:20px;top:271.0px;width:5px;height:6px;background:#959595"></div><div class="a" style="left:26px;top:271.0px;width:4px;height:7px;background:#8a8a8a"></div><div class="a" style="left:31px;top:271.0px;width:4px;height:6px;background:#808080"></div><div class="a" style="left:36px;top:271.0px;width:5px;height:6px;background:#808080"></div><div class="a" style="left:45px;top:271.0px;width:6px;height:6px;background:#808080"></div><div class="a" style="left:52px;top:270.0px;width:4px;height:6px;background:#959595"></div><div class="a" style="left:57px;top:270.0px;width:5px;height:6px;background:#8a8a8a"></div><div class="a" style="left:63px;top:270.0px;width:6px;height:6px;background:#808080"></div><div class="a" style="left:70px;top:270.0px;width:6px;height:7px;background:#8a8a8a"></div><div class="a" style="left:77px;top:271.0px;width:5px;height:6px;background:#808080"></div><div class="a" style="left:83px;top:270.0px;width:4px;height:6px;background:#8a8a8a"></div><div class="a" style="left:180px;top:271.0px;width:4px;height:6px;background:#959595"></div><div class="a" style="left:185px;top:271.0px;width:4px;height:6px;background:#959595"></div><div class="a" style="left:190px;top:271.0px;width:4px;height:6px;background:#959595"></div><div class="a" style="left:196px;top:271.0px;width:4px;height:6px;background:#959595"></div><div class="a" style="left:8px;top:283.7px;width:6px;height:6px;background:#959595"></div><div class="a" style="left:15px;top:283.7px;width:6px;height:6px;background:#959595"></div><div class="a" style="left:22px;top:283.7px;width:4px;height:6px;background:#808080"></div><div class="a" style="left:27px;top:282.7px;width:5px;height:7px;background:#8a8a8a"></div><div class="a" style="left:33px;top:282.7px;width:6px;height:6px;background:#808080"></div><div class="a" style="left:40px;top:283.7px;width:4px;height:6px;background:#808080"></div><div class="a" style="left:45px;top:283.7px;width:3px;height:6px;background:#959595"></div><div class="a" style="left:49px;top:283.7px;width:3px;height:6px;background:#8a8a8a"></div><div class="a" style="left:53px;top:283.7px;width:6px;height:6px;background:#8a8a8a"></div><div class="a" style="left:60px;top:283.7px;width:5px;height:7px;background:#8a8a8a"></div><div class="a" style="left:66px;top:283.7px;width:4px;height:6px;background:#808080"></div><div class="a" style="left:180px;top:283.7px;width:4px;height:6px;background:#959595"></div><div class="a" style="left:185px;top:283.7px;width:4px;height:6px;background:#959595"></div><div class="a" style="left:190px;top:283.7px;width:4px;height:6px;background:#959595"></div><div class="a" style="left:196px;top:283.7px;width:4px;height:6px;background:#959595"></div><div class="a" style="left:108px;top:282.7px;width:14px;height:8px;background:#606060;opacity:.2"></div><div class="a" style="left:8px;top:296.3px;width:5px;height:6px;background:#959595"></div><div class="a" style="left:14px;top:296.3px;width:5px;height:6px;background:#8a8a8a"></div><div class="a" style="left:20px;top:295.3px;width:3px;height:6px;background:#8a8a8a"></div><div class="a" style="left:24px;top:296.3px;width:3px;height:6px;background:#959595"></div><div class="a" style="left:28px;top:295.3px;width:3px;height:7px;background:#959595"></div><div class="a" style="left:35px;top:295.3px;width:6px;height:6px;background:#8a8a8a"></div><div class="a" style="left:42px;top:295.3px;width:4px;height:7px;background:#959595"></div><div class="a" style="left:47px;top:295.3px;width:3px;height:6px;background:#8a8a8a"></div><div class="a" style="left:51px;top:296.3px;width:4px;height:6px;background:#808080"></div><div class="a" style="left:56px;top:295.3px;width:4px;height:6px;background:#8a8a8a"></div><div class="a" style="left:61px;top:296.3px;width:4px;height:6px;background:#8a8a8a"></div><div class="a" style="left:66px;top:295.3px;width:4px;height:6px;background:#8a8a8a"></div><div class="a" style="left:71px;top:296.3px;width:2px;height:6px;background:#808080"></div><div class="a" style="left:180px;top:296.3px;width:4px;height:6px;background:#959595"></div><div class="a" style="left:185px;top:296.3px;width:4px;height:6px;background:#959595"></div><div class="a" style="left:190px;top:296.3px;width:4px;height:6px;background:#959595"></div><div class="a" style="left:196px;top:296.3px;width:4px;height:6px;background:#959595"></div><div class="a" style="left:8px;top:308.0px;width:3px;height:6px;background:#959595"></div><div class="a" style="left:12px;top:309.0px;width:4px;height:6px;background:#808080"></div><div class="a" style="left:17px;top:308.0px;width:4px;height:6px;background:#959595"></div><div class="a" style="left:22px;top:309.0px;width:4px;height:6px;background:#959595"></div><div class="a" style="left:27px;top:309.0px;width:6px;height:6px;background:#8a8a8a"></div><div class="a" style="left:34px;top:309.0px;width:6px;height:6px;background:#8a8a8a"></div><div class="a" style="left:41px;top:309.0px;width:4px;height:6px;background:#808080"></div><div class="a" style="left:46px;top:309.0px;width:4px;height:7px;background:#808080"></div><div class="a" style="left:51px;top:309.0px;width:4px;height:6px;background:#8a8a8a"></div><div class="a" style="left:56px;top:308.0px;width:6px;height:6px;background:#959595"></div><div class="a" style="left:63px;top:309.0px;width:4px;height:6px;background:#808080"></div><div class="a" style="left:68px;top:308.0px;width:4px;height:6px;background:#8a8a8a"></div><div class="a" style="left:73px;top:309.0px;width:5px;height:7px;background:#8a8a8a"></div><div class="a" style="left:180px;top:309.0px;width:4px;height:6px;background:#959595"></div><div class="a" style="left:185px;top:309.0px;width:4px;height:6px;background:#959595"></div><div class="a" style="left:190px;top:309.0px;width:4px;height:6px;background:#959595"></div><div class="a" style="left:196px;top:309.0px;width:4px;height:6px;background:#959595"></div><div class="a" style="left:108px;top:308.0px;width:14px;height:8px;background:#606060;opacity:.2"></div><div class="a" style="left:8px;top:320.7px;width:3px;height:7px;background:#8a8a8a"></div><div class="a" style="left:12px;top:320.7px;width:4px;height:6px;background:#808080"></div><div class="a" style="left:17px;top:321.7px;width:5px;height:6px;background:#808080"></div><div class="a" style="left:23px;top:321.7px;width:4px;height:6px;background:#808080"></div><div class="a" style="left:28px;top:321.7px;width:3px;height:7px;background:#808080"></div><div class="a" style="left:32px;top:320.7px;width:5px;height:6px;background:#959595"></div><div class="a" style="left:38px;top:321.7px;width:4px;height:7px;background:#808080"></div><div class="a" style="left:43px;top:321.7px;width:3px;height:6px;background:#8a8a8a"></div><div class="a" style="left:47px;top:321.7px;width:6px;height:6px;background:#959595"></div><div class="a" style="left:54px;top:320.7px;width:5px;height:6px;background:#808080"></div><div class="a" style="left:60px;top:321.7px;width:3px;height:6px;background:#808080"></div><div class="a" style="left:64px;top:320.7px;width:4px;height:6px;background:#808080"></div><div class="a" style="left:69px;top:321.7px;width:2px;height:6px;background:#808080"></div><div class="a" style="left:180px;top:321.7px;width:4px;height:6px;background:#959595"></div><div class="a" style="left:185px;top:321.7px;width:4px;height:6px;background:#959595"></div><div class="a" style="left:190px;top:321.7px;width:4px;height:6px;background:#959595"></div><div class="a" style="left:196px;top:321.7px;width:4px;height:6px;background:#959595"></div><div class="a" style="left:8px;top:334.4px;width:6px;height:6px;background:#959595"></div><div class="a" style="left:15px;top:334.4px;width:5px;height:7px;background:#8a8a8a"></div><div class="a" style="left:21px;top:334.4px;width:3px;height:7px;background:#959595"></div><div class="a" style="left:25px;top:334.4px;width:5px;height:7px;background:#8a8a8a"></div><div class="a" style="left:31px;top:333.4px;width:5px;height:6px;background:#808080"></div><div class="a" style="left:37px;top:334.4px;width:4px;height:7px;background:#959595"></div><div class="a" style="left:42px;top:333.4px;width:3px;height:6px;background:#959595"></div><div class="a" style="left:46px;top:334.4px;width:4px;height:7px;background:#959595"></div><div class="a" style="left:180px;top:334.4px;width:4px;height:6px;background:#959595"></div><div class="a" style="left:185px;top:334.4px;width:4px;height:6px;background:#959595"></div><div class="a" style="left:190px;top:334.4px;width:4px;height:6px;background:#959595"></div><div class="a" style="left:196px;top:334.4px;width:4px;height:6px;background:#959595"></div><div class="a" style="left:121px;top:333.4px;width:42px;height:9px;background:#6a6a6a;opacity:0.54;border-radius:4px"></div><div class="a" style="left:8px;top:347.1px;width:6px;height:7px;background:#808080"></div><div class="a" style="left:15px;top:347.1px;width:3px;height:7px;background:#8a8a8a"></div><div class="a" style="left:19px;top:347.1px;width:4px;height:7px;background:#808080"></div><div class="a" style="left:24px;top:346.1px;width:4px;height:6px;background:#959595"></div><div class="a" style="left:29px;top:347.1px;width:4px;height:6px;background:#959595"></div><div class="a" style="left:34px;top:347.1px;width:6px;height:6px;background:#959595"></div><div class="a" style="left:41px;top:347.1px;width:3px;height:6px;background:#959595"></div><div class="a" style="left:45px;top:347.1px;width:4px;height:6px;background:#808080"></div><div class="a" style="left:50px;top:347.1px;width:5px;height:7px;background:#808080"></div><div class="a" style="left:56px;top:346.1px;width:4px;height:7px;background:#959595"></div><div class="a" style="left:61px;top:347.1px;width:2px;height:7px;background:#808080"></div><div class="a" style="left:180px;top:347.1px;width:4px;height:6px;background:#959595"></div><div class="a" style="left:185px;top:347.1px;width:4px;height:6px;background:#959595"></div><div class="a" style="left:190px;top:347.1px;width:4px;height:6px;background:#959595"></div><div class="a" style="left:196px;top:347.1px;width:4px;height:6px;background:#959595"></div><div class="a" style="left:121px;top:346.1px;width:42px;height:9px;background:#6a6a6a;opacity:0.54;border-radius:4px"></div><div class="a" style="left:8px;top:359.7px;width:4px;height:6px;background:#959595"></div><div class="a" style="left:13px;top:359.7px;width:3px;height:7px;background:#959595"></div><div class="a" style="left:17px;top:358.7px;width:4px;height:6px;background:#959595"></div><div class="a" style="left:22px;top:359.7px;width:3px;height:6px;background:#959595"></div><div class="a" style="left:26px;top:358.7px;width:5px;height:7px;background:#808080"></div><div class="a" style="left:32px;top:358.7px;width:3px;height:6px;background:#959595"></div><div class="a" style="left:36px;top:359.7px;width:3px;height:6px;background:#8a8a8a"></div><div class="a" style="left:40px;top:358.7px;width:5px;height:7px;background:#959595"></div><div class="a" style="left:46px;top:358.7px;width:4px;height:6px;background:#8a8a8a"></div><div class="a" style="left:51px;top:359.7px;width:3px;height:6px;background:#808080"></div><div class="a" style="left:55px;top:359.7px;width:4px;height:6px;background:#959595"></div><div class="a" style="left:60px;top:359.7px;width:5px;height:7px;background:#959595"></div><div class="a" style="left:180px;top:359.7px;width:4px;height:6px;background:#959595"></div><div class="a" style="left:185px;top:359.7px;width:4px;height:6px;background:#959595"></div><div class="a" style="left:190px;top:359.7px;width:4px;height:6px;background:#959595"></div><div class="a" style="left:196px;top:359.7px;width:4px;height:6px;background:#959595"></div><div class="a" style="left:121px;top:358.7px;width:42px;height:9px;background:#6a6a6a;opacity:0.41;border-radius:4px"></div><div class="a" style="left:8px;top:371.4px;width:5px;height:6px;background:#808080"></div><div class="a" style="left:14px;top:372.4px;width:4px;height:7px;background:#959595"></div><div class="a" style="left:19px;top:372.4px;width:4px;height:6px;background:#959595"></div><div class="a" style="left:24px;top:371.4px;width:4px;height:7px;background:#808080"></div><div class="a" style="left:29px;top:372.4px;width:4px;height:6px;background:#808080"></div><div class="a" style="left:37px;top:371.4px;width:5px;height:6px;background:#808080"></div><div class="a" style="left:43px;top:372.4px;width:5px;height:6px;background:#959595"></div><div class="a" style="left:49px;top:372.4px;width:4px;height:7px;background:#808080"></div><div class="a" style="left:54px;top:372.4px;width:4px;height:7px;background:#959595"></div><div class="a" style="left:59px;top:372.4px;width:3px;height:6px;background:#959595"></div><div class="a" style="left:63px;top:372.4px;width:3px;height:6px;background:#8a8a8a"></div><div class="a" style="left:67px;top:372.4px;width:5px;height:6px;background:#8a8a8a"></div><div class="a" style="left:180px;top:372.4px;width:4px;height:6px;background:#959595"></div><div class="a" style="left:185px;top:372.4px;width:4px;height:6px;background:#959595"></div><div class="a" style="left:190px;top:372.4px;width:4px;height:6px;background:#959595"></div><div class="a" style="left:196px;top:372.4px;width:4px;height:6px;background:#959595"></div><div class="a" style="left:123px;top:371.4px;width:42px;height:9px;background:#6a6a6a;opacity:0.41;border-radius:4px"></div><div class="a" style="left:8px;top:385.1px;width:3px;height:6px;background:#8a8a8a"></div><div class="a" style="left:12px;top:385.1px;width:6px;height:6px;background:#959595"></div><div class="a" style="left:19px;top:385.1px;width:4px;height:7px;background:#959595"></div><div class="a" style="left:24px;top:385.1px;width:6px;height:6px;background:#8a8a8a"></div><div class="a" style="left:31px;top:384.1px;width:6px;height:6px;background:#959595"></div><div class="a" style="left:38px;top:385.1px;width:6px;height:7px;background:#8a8a8a"></div><div class="a" style="left:45px;top:385.1px;width:4px;height:7px;background:#8a8a8a"></div><div class="a" style="left:50px;top:385.1px;width:4px;height:7px;background:#959595"></div><div class="a" style="left:55px;top:384.1px;width:6px;height:7px;background:#808080"></div><div class="a" style="left:62px;top:385.1px;width:4px;height:6px;background:#808080"></div><div class="a" style="left:67px;top:385.1px;width:4px;height:7px;background:#959595"></div><div class="a" style="left:72px;top:384.1px;width:1px;height:6px;background:#808080"></div><div class="a" style="left:180px;top:385.1px;width:4px;height:6px;background:#959595"></div><div class="a" style="left:185px;top:385.1px;width:4px;height:6px;background:#959595"></div><div class="a" style="left:190px;top:385.1px;width:4px;height:6px;background:#959595"></div><div class="a" style="left:196px;top:385.1px;width:4px;height:6px;background:#959595"></div><div class="a" style="left:123px;top:384.1px;width:42px;height:9px;background:#6a6a6a;opacity:0.41;border-radius:4px"></div><div class="a" style="left:8px;top:397.8px;width:4px;height:6px;background:#8a8a8a"></div><div class="a" style="left:13px;top:396.8px;width:4px;height:6px;background:#808080"></div><div class="a" style="left:18px;top:396.8px;width:4px;height:6px;background:#808080"></div><div class="a" style="left:23px;top:397.8px;width:3px;height:6px;background:#959595"></div><div class="a" style="left:27px;top:397.8px;width:4px;height:6px;background:#8a8a8a"></div><div class="a" style="left:32px;top:396.8px;width:3px;height:6px;background:#8a8a8a"></div><div class="a" style="left:36px;top:397.8px;width:3px;height:6px;background:#8a8a8a"></div><div class="a" style="left:40px;top:397.8px;width:6px;height:6px;background:#808080"></div><div class="a" style="left:47px;top:397.8px;width:6px;height:6px;background:#959595"></div><div class="a" style="left:54px;top:397.8px;width:3px;height:6px;background:#959595"></div><div class="a" style="left:58px;top:397.8px;width:3px;height:7px;background:#8a8a8a"></div><div class="a" style="left:62px;top:396.8px;width:4px;height:6px;background:#8a8a8a"></div><div class="a" style="left:67px;top:397.8px;width:3px;height:6px;background:#959595"></div><div class="a" style="left:71px;top:397.8px;width:4px;height:6px;background:#808080"></div><div class="a" style="left:76px;top:397.8px;width:5px;height:6px;background:#808080"></div><div class="a" style="left:82px;top:396.8px;width:1px;height:7px;background:#959595"></div><div class="a" style="left:180px;top:397.8px;width:4px;height:6px;background:#959595"></div><div class="a" style="left:185px;top:397.8px;width:4px;height:6px;background:#959595"></div><div class="a" style="left:190px;top:397.8px;width:4px;height:6px;background:#959595"></div><div class="a" style="left:196px;top:397.8px;width:4px;height:6px;background:#959595"></div><div class="a" style="left:123px;top:396.8px;width:40px;height:9px;background:#6a6a6a;opacity:0.41;border-radius:4px"></div><div class="a" style="left:8px;top:410.5px;width:4px;height:7px;background:#959595"></div><div class="a" style="left:13px;top:410.5px;width:5px;height:6px;background:#959595"></div><div class="a" style="left:19px;top:410.5px;width:3px;height:6px;background:#959595"></div><div class="a" style="left:23px;top:410.5px;width:4px;height:6px;background:#808080"></div><div class="a" style="left:28px;top:410.5px;width:4px;height:6px;background:#808080"></div><div class="a" style="left:33px;top:410.5px;width:6px;height:7px;background:#8a8a8a"></div><div class="a" style="left:40px;top:410.5px;width:5px;height:7px;background:#8a8a8a"></div><div class="a" style="left:49px;top:410.5px;width:4px;height:7px;background:#8a8a8a"></div><div class="a" style="left:54px;top:410.5px;width:5px;height:6px;background:#808080"></div><div class="a" style="left:60px;top:410.5px;width:5px;height:7px;background:#808080"></div><div class="a" style="left:66px;top:410.5px;width:4px;height:6px;background:#808080"></div><div class="a" style="left:71px;top:410.5px;width:4px;height:6px;background:#8a8a8a"></div><div class="a" style="left:76px;top:410.5px;width:5px;height:6px;background:#959595"></div><div class="a" style="left:180px;top:410.5px;width:4px;height:6px;background:#959595"></div><div class="a" style="left:185px;top:410.5px;width:4px;height:6px;background:#959595"></div><div class="a" style="left:190px;top:410.5px;width:4px;height:6px;background:#959595"></div><div class="a" style="left:196px;top:410.5px;width:4px;height:6px;background:#959595"></div><div class="a" style="left:123px;top:409.5px;width:40px;height:9px;background:#6a6a6a;opacity:0.41;border-radius:4px"></div><div class="a" style="left:8px;top:423.1px;width:5px;height:6px;background:#8a8a8a"></div><div class="a" style="left:14px;top:423.1px;width:5px;height:6px;background:#959595"></div><div class="a" style="left:20px;top:423.1px;width:4px;height:6px;background:#8a8a8a"></div><div class="a" style="left:25px;top:422.1px;width:4px;height:6px;background:#8a8a8a"></div><div class="a" style="left:30px;top:423.1px;width:5px;height:6px;background:#959595"></div><div class="a" style="left:39px;top:423.1px;width:4px;height:6px;background:#808080"></div><div class="a" style="left:44px;top:423.1px;width:3px;height:6px;background:#808080"></div><div class="a" style="left:48px;top:423.1px;width:6px;height:6px;background:#808080"></div><div class="a" style="left:55px;top:422.1px;width:3px;height:7px;background:#8a8a8a"></div><div class="a" style="left:59px;top:423.1px;width:4px;height:6px;background:#808080"></div><div class="a" style="left:64px;top:423.1px;width:4px;height:6px;background:#808080"></div><div class="a" style="left:69px;top:423.1px;width:4px;height:6px;background:#808080"></div><div class="a" style="left:180px;top:423.1px;width:4px;height:6px;background:#959595"></div><div class="a" style="left:185px;top:423.1px;width:4px;height:6px;background:#959595"></div><div class="a" style="left:190px;top:423.1px;width:4px;height:6px;background:#959595"></div><div class="a" style="left:196px;top:423.1px;width:4px;height:6px;background:#959595"></div><div class="a" style="left:108px;top:422.1px;width:14px;height:8px;background:#606060;opacity:.2"></div><div class="a" style="left:8px;top:435.8px;width:6px;height:7px;background:#959595"></div><div class="a" style="left:15px;top:434.8px;width:4px;height:6px;background:#959595"></div><div class="a" style="left:20px;top:435.8px;width:3px;height:6px;background:#808080"></div><div class="a" style="left:24px;top:434.8px;width:6px;height:6px;background:#808080"></div><div class="a" style="left:31px;top:435.8px;width:5px;height:7px;background:#8a8a8a"></div><div class="a" style="left:40px;top:434.8px;width:5px;height:7px;background:#959595"></div><div class="a" style="left:46px;top:434.8px;width:3px;height:6px;background:#959595"></div><div class="a" style="left:50px;top:435.8px;width:6px;height:7px;background:#8a8a8a"></div><div class="a" style="left:57px;top:435.8px;width:4px;height:6px;background:#959595"></div><div class="a" style="left:62px;top:434.8px;width:3px;height:6px;background:#959595"></div><div class="a" style="left:180px;top:435.8px;width:4px;height:6px;background:#959595"></div><div class="a" style="left:185px;top:435.8px;width:4px;height:6px;background:#959595"></div><div class="a" style="left:190px;top:435.8px;width:4px;height:6px;background:#959595"></div><div class="a" style="left:196px;top:435.8px;width:4px;height:6px;background:#959595"></div><div class="a" style="left:108px;top:434.8px;width:14px;height:8px;background:#606060;opacity:.2"></div><div class="a" style="left:8px;top:447.5px;width:6px;height:6px;background:#8a8a8a"></div><div class="a" style="left:15px;top:448.5px;width:3px;height:6px;background:#808080"></div><div class="a" style="left:19px;top:447.5px;width:3px;height:6px;background:#808080"></div><div class="a" style="left:23px;top:447.5px;width:4px;height:6px;background:#8a8a8a"></div><div class="a" style="left:31px;top:448.5px;width:6px;height:6px;background:#8a8a8a"></div><div class="a" style="left:38px;top:448.5px;width:5px;height:7px;background:#808080"></div><div class="a" style="left:44px;top:447.5px;width:4px;height:6px;background:#8a8a8a"></div><div class="a" style="left:49px;top:448.5px;width:4px;height:7px;background:#959595"></div><div class="a" style="left:54px;top:448.5px;width:4px;height:6px;background:#808080"></div><div class="a" style="left:59px;top:447.5px;width:2px;height:6px;background:#808080"></div><div class="a" style="left:180px;top:448.5px;width:4px;height:6px;background:#959595"></div><div class="a" style="left:185px;top:448.5px;width:4px;height:6px;background:#959595"></div><div class="a" style="left:190px;top:448.5px;width:4px;height:6px;background:#959595"></div><div class="a" style="left:196px;top:448.5px;width:4px;height:6px;background:#959595"></div><div class="a" style="left:118px;top:447.5px;width:40px;height:9px;background:#6a6a6a;opacity:0.32;border-radius:4px"></div><div class="a" style="left:8px;top:461.2px;width:3px;height:7px;background:#959595"></div><div class="a" style="left:12px;top:461.2px;width:6px;height:6px;background:#808080"></div><div class="a" style="left:19px;top:461.2px;width:5px;height:7px;background:#808080"></div><div class="a" style="left:25px;top:461.2px;width:5px;height:6px;background:#959595"></div><div class="a" style="left:31px;top:461.2px;width:6px;height:6px;background:#959595"></div><div class="a" style="left:38px;top:461.2px;width:6px;height:7px;background:#808080"></div><div class="a" style="left:45px;top:461.2px;width:5px;height:7px;background:#959595"></div><div class="a" style="left:51px;top:461.2px;width:4px;height:6px;background:#808080"></div><div class="a" style="left:56px;top:461.2px;width:3px;height:6px;background:#8a8a8a"></div><div class="a" style="left:60px;top:461.2px;width:6px;height:6px;background:#808080"></div><div class="a" style="left:67px;top:460.2px;width:5px;height:7px;background:#959595"></div><div class="a" style="left:180px;top:461.2px;width:4px;height:6px;background:#959595"></div><div class="a" style="left:185px;top:461.2px;width:4px;height:6px;background:#959595"></div><div class="a" style="left:190px;top:461.2px;width:4px;height:6px;background:#959595"></div><div class="a" style="left:196px;top:461.2px;width:4px;height:6px;background:#959595"></div><div class="a" style="left:118px;top:460.2px;width:40px;height:9px;background:#6a6a6a;opacity:0.32;border-radius:4px"></div><div class="a" style="left:8px;top:473.9px;width:3px;height:6px;background:#808080"></div><div class="a" style="left:12px;top:473.9px;width:5px;height:6px;background:#8a8a8a"></div><div class="a" style="left:18px;top:472.9px;width:3px;height:6px;background:#959595"></div><div class="a" style="left:22px;top:473.9px;width:4px;height:6px;background:#808080"></div><div class="a" style="left:27px;top:473.9px;width:3px;height:7px;background:#808080"></div><div class="a" style="left:31px;top:473.9px;width:3px;height:7px;background:#959595"></div><div class="a" style="left:38px;top:472.9px;width:3px;height:7px;background:#8a8a8a"></div><div class="a" style="left:42px;top:472.9px;width:3px;height:6px;background:#8a8a8a"></div><div class="a" style="left:46px;top:473.9px;width:4px;height:6px;background:#959595"></div><div class="a" style="left:51px;top:473.9px;width:4px;height:7px;background:#959595"></div><div class="a" style="left:56px;top:473.9px;width:6px;height:6px;background:#8a8a8a"></div><div class="a" style="left:180px;top:473.9px;width:4px;height:6px;background:#959595"></div><div class="a" style="left:185px;top:473.9px;width:4px;height:6px;background:#959595"></div><div class="a" style="left:190px;top:473.9px;width:4px;height:6px;background:#959595"></div><div class="a" style="left:196px;top:473.9px;width:4px;height:6px;background:#959595"></div><div class="a" style="left:6px;top:231px;width:212px;height:19px;background:#f2f2b8;opacity:.85;mix-blend-mode:multiply"></div></div></div>
<div class="a" style="left:12px;top:743px;width:224px;height:1px;background:#a0a0a0"></div>
<div class="tab" style="left:14px;top:745px;width:36px;height:16px;padding-top:3px">Carers</div>
<div class="a" style="left:50px;top:744px;width:40px;height:18px;background:#f0f0f0;text-align:center;padding-top:5px">Clients</div>
<div class="tab" style="left:89px;top:745px;width:27px;height:16px;padding-top:3px">Day</div>
<div class="a" style="left:116px;top:757px;width:120px;height:2px;border-top:1px solid #696969;border-bottom:1px solid #a0a0a0"></div>
<div class="tab" style="left:22px;top:762px;width:28px;height:16px;padding-top:3px">Run</div>
<div class="tab" style="left:51px;top:762px;width:58px;height:16px;padding-top:3px">Pencilled In</div>
<div class="t" style="left:12px;top:789px">Find</div>
<div class="combo" style="left:39px;top:788px;width:122px;height:15px"></div>
<div class="t" style="left:191px;top:782px">P 00:00</div><div class="t" style="left:191px;top:796px">A 00:00</div>
<div class="a" style="left:11px;top:813px;width:204px;height:30px;border:1px solid #b8b8b8;border-bottom:none;box-shadow:inset 1px 1px 0 #fff"></div>
<div class="a" style="left:22px;top:820px;width:17px;height:7px;background:#00f0f0;border:1px solid #888"></div>
<div class="t" style="left:42px;top:818px">Client away</div>
<div class="a" style="left:22px;top:831px;width:17px;height:7px;background:#ffff00;border:1px solid #888"></div>
<div class="t" style="left:42px;top:829px">Carer away</div>
<div class="a" style="left:107px;top:820px;width:17px;height:7px;background:#f00000;border:1px solid #888"></div>
<div class="t" style="left:127px;top:818px">No carer</div>
<div class="a" style="left:107px;top:831px;width:17px;height:7px;background:#c0c000;border:1px solid #888"></div>
<div class="t" style="left:127px;top:829px">Uncovered critical</div>
<div class="t" style="left:242px;top:211px">Week</div>
<div class="combo" style="left:284px;top:209px;width:67px;height:15px;border-color:#fff #fff #fff #fff;box-shadow:inset 1px 1px 0 #404040,inset -1px -1px 0 #f0f0f0"><div class="t" style="left:2px;top:2px;font-size:10.5px;letter-spacing:-0.3px">06/02/2012</div><div class="cb" style="width:13px"><div class="dn" style="left:2px;top:4px"></div></div></div>
<div class="btn" style="left:351px;top:209px;width:14px;height:15px"><div class="up" style="left:3.5px;top:2.5px;border-width:0 2.5px 2.5px"></div><div class="a" style="left:1px;top:6px;width:10px;height:1px;background:#c8c8c8"></div><div class="dn" style="left:3.5px;top:8.5px;border-width:2.5px 2.5px 0"></div></div>
<div class="btn" style="left:365px;top:209px;width:35px;height:15px;text-align:center;padding-top:2px">Mon</div>
<div class="combo" style="left:406px;top:209px;width:122px;height:17px"><div class="t" style="left:3px;top:4px;font-size:10px">Crossroads</div><div class="cb"><div class="dn"></div></div></div>
<div class="a" style="left:279px;top:230px;width:926px;height:15px;background:linear-gradient(#fefefe,#f4f4f4)"></div>
<div class="t" style="left:284px;top:233px;font-weight:bold;font-size:10px;letter-spacing:0">6</div>
<div class="t" style="left:299px;width:100px;text-align:center;top:233px;font-size:10px;letter-spacing:0;color:#1a1a1a">Monday</div>
<div class="t" style="left:415px;top:233px;font-weight:bold;font-size:10px;letter-spacing:0">7</div>
<div class="t" style="left:430px;width:100px;text-align:center;top:233px;font-size:10px;letter-spacing:0;color:#1a1a1a">Tuesday</div>
<div class="a" style="left:410px;top:230px;width:1px;height:15px;background:#fff"></div>
<div class="t" style="left:547px;top:233px;font-weight:bold;font-size:10px;letter-spacing:0">8</div>
<div class="t" style="left:562px;width:100px;text-align:center;top:233px;font-size:10px;letter-spacing:0;color:#1a1a1a">Wednesday</div>
<div class="a" style="left:542px;top:230px;width:1px;height:15px;background:#fff"></div>
<div class="t" style="left:679px;top:233px;font-weight:bold;font-size:10px;letter-spacing:0">9</div>
<div class="t" style="left:694px;width:100px;text-align:center;top:233px;font-size:10px;letter-spacing:0;color:#1a1a1a">Thursday</div>
<div class="a" style="left:674px;top:230px;width:1px;height:15px;background:#fff"></div>
<div class="t" style="left:811px;top:233px;font-weight:bold;font-size:10px;letter-spacing:0">10</div>
<div class="t" style="left:826px;width:100px;text-align:center;top:233px;font-size:10px;letter-spacing:0;color:#1a1a1a">Friday</div>
<div class="a" style="left:806px;top:230px;width:1px;height:15px;background:#fff"></div>
<div class="t" style="left:943px;top:233px;font-weight:bold;font-size:10px;letter-spacing:0">11</div>
<div class="t" style="left:958px;width:100px;text-align:center;top:233px;font-size:10px;letter-spacing:0;color:#1a1a1a">Saturday</div>
<div class="a" style="left:938px;top:230px;width:1px;height:15px;background:#fff"></div>
<div class="t" style="left:1076px;top:233px;font-weight:bold;font-size:10px;letter-spacing:0">12</div>
<div class="t" style="left:1091px;width:100px;text-align:center;top:233px;font-size:10px;letter-spacing:0;color:#1a1a1a">Sunday</div>
<div class="a" style="left:1071px;top:230px;width:1px;height:15px;background:#fff"></div>
<div class="a" style="left:279px;top:245px;width:925px;height:22px;background:#a5bfe1"></div>
<div class="a" style="left:279px;top:267px;width:925px;height:476px;background:#fff"></div>
<div class="a" style="left:280px;top:284px;width:923px;height:1px;background:#ecf1f9"></div>
<div class="a" style="left:280px;top:301px;width:923px;height:1px;background:#ecf1f9"></div>
<div class="a" style="left:280px;top:318px;width:923px;height:1px;background:#ecf1f9"></div>
<div class="a" style="left:280px;top:335px;width:923px;height:1px;background:#d3dff0"></div>
<div class="a" style="left:280px;top:352px;width:923px;height:1px;background:#ecf1f9"></div>
<div class="a" style="left:280px;top:369px;width:923px;height:1px;background:#ecf1f9"></div>
<div class="a" style="left:280px;top:386px;width:923px;height:1px;background:#ecf1f9"></div>
<div class="a" style="left:280px;top:403px;width:923px;height:1px;background:#d3dff0"></div>
<div class="a" style="left:280px;top:420px;width:923px;height:1px;background:#ecf1f9"></div>
<div class="a" style="left:280px;top:437px;width:923px;height:1px;background:#ecf1f9"></div>
<div class="a" style="left:280px;top:454px;width:923px;height:1px;background:#ecf1f9"></div>
<div class="a" style="left:280px;top:471px;width:923px;height:1px;background:#d3dff0"></div>
<div class="a" style="left:280px;top:488px;width:923px;height:1px;background:#ecf1f9"></div>
<div class="a" style="left:280px;top:506px;width:923px;height:1px;background:#ecf1f9"></div>
<div class="a" style="left:280px;top:523px;width:923px;height:1px;background:#ecf1f9"></div>
<div class="a" style="left:280px;top:540px;width:923px;height:1px;background:#d3dff0"></div>
<div class="a" style="left:280px;top:557px;width:923px;height:1px;background:#ecf1f9"></div>
<div class="a" style="left:280px;top:574px;width:923px;height:1px;background:#ecf1f9"></div>
<div class="a" style="left:280px;top:591px;width:923px;height:1px;background:#ecf1f9"></div>
<div class="a" style="left:280px;top:608px;width:923px;height:1px;background:#d3dff0"></div>
<div class="a" style="left:280px;top:625px;width:923px;height:1px;background:#ecf1f9"></div>
<div class="a" style="left:280px;top:642px;width:923px;height:1px;background:#ecf1f9"></div>
<div class="a" style="left:280px;top:659px;width:923px;height:1px;background:#ecf1f9"></div>
<div class="a" style="left:280px;top:676px;width:923px;height:1px;background:#d3dff0"></div>
<div class="a" style="left:280px;top:693px;width:923px;height:1px;background:#ecf1f9"></div>
<div class="a" style="left:280px;top:710px;width:923px;height:1px;background:#ecf1f9"></div>
<div class="a" style="left:280px;top:727px;width:923px;height:1px;background:#ecf1f9"></div>
<div class="a" style="left:279px;top:266px;width:925px;height:2px;background:linear-gradient(#6a96d4,#4a78bc)"></div>
<div class="a" style="left:279px;top:743px;width:925px;height:1px;background:#7ea2d8"></div>
<div class="a" style="left:279px;top:245px;width:1px;height:499px;background:#6892cf"></div>
<div class="a" style="left:410px;top:245px;width:2px;height:499px;background:#6892cf"></div>
<div class="a" style="left:542px;top:245px;width:2px;height:499px;background:#6892cf"></div>
<div class="a" style="left:674px;top:245px;width:2px;height:499px;background:#6892cf"></div>
<div class="a" style="left:806px;top:245px;width:2px;height:499px;background:#6892cf"></div>
<div class="a" style="left:938px;top:245px;width:2px;height:499px;background:#6892cf"></div>
<div class="a" style="left:1071px;top:245px;width:2px;height:499px;background:#6892cf"></div>
<div class="a" style="left:1204px;top:245px;width:1px;height:499px;background:#6892cf"></div>
<div class="a" style="left:280px;top:268px;width:130px;height:16px;background:#2b4c7e"></div>
<div class="a" style="left:243px;top:267px;width:36px;height:1px;background:#5a5a5a"></div>
<div class="a" style="left:265px;top:284px;width:11px;height:1px;background:#5a5a5a"></div>
<div class="a" style="left:265px;top:301px;width:11px;height:1px;background:#5a5a5a"></div>
<div class="a" style="left:265px;top:318px;width:11px;height:1px;background:#5a5a5a"></div>
<div class="t" style="left:249px;top:270px;font-size:14px;font-weight:bold;letter-spacing:-0.5px">07</div>
<div class="t" style="left:266px;top:270px;font-size:8px;font-weight:bold;letter-spacing:0">00</div>
<div class="a" style="left:247px;top:335px;width:29px;height:1px;background:#5a5a5a"></div>
<div class="a" style="left:265px;top:352px;width:11px;height:1px;background:#5a5a5a"></div>
<div class="a" style="left:265px;top:369px;width:11px;height:1px;background:#5a5a5a"></div>
<div class="a" style="left:265px;top:386px;width:11px;height:1px;background:#5a5a5a"></div>
<div class="t" style="left:249px;top:338px;font-size:14px;font-weight:bold;letter-spacing:-0.5px">08</div>
<div class="t" style="left:266px;top:338px;font-size:8px;font-weight:bold;letter-spacing:0">00</div>
<div class="a" style="left:247px;top:403px;width:29px;height:1px;background:#5a5a5a"></div>
<div class="a" style="left:265px;top:420px;width:11px;height:1px;background:#5a5a5a"></div>
<div class="a" style="left:265px;top:437px;width:11px;height:1px;background:#5a5a5a"></div>
<div class="a" style="left:265px;top:454px;width:11px;height:1px;background:#5a5a5a"></div>
<div class="t" style="left:249px;top:406px;font-size:14px;font-weight:bold;letter-spacing:-0.5px">09</div>
<div class="t" style="left:266px;top:406px;font-size:8px;font-weight:bold;letter-spacing:0">00</div>
<div class="a" style="left:247px;top:471px;width:29px;height:1px;background:#5a5a5a"></div>
<div class="a" style="left:265px;top:488px;width:11px;height:1px;background:#5a5a5a"></div>
<div class="a" style="left:265px;top:505px;width:11px;height:1px;background:#5a5a5a"></div>
<div class="a" style="left:265px;top:522px;width:11px;height:1px;background:#5a5a5a"></div>
<div class="t" style="left:249px;top:474px;font-size:14px;font-weight:bold;letter-spacing:-0.5px">10</div>
<div class="t" style="left:266px;top:474px;font-size:8px;font-weight:bold;letter-spacing:0">00</div>
<div class="a" style="left:247px;top:539px;width:29px;height:1px;background:#5a5a5a"></div>
<div class="a" style="left:265px;top:556px;width:11px;height:1px;background:#5a5a5a"></div>
<div class="a" style="left:265px;top:573px;width:11px;height:1px;background:#5a5a5a"></div>
<div class="a" style="left:265px;top:590px;width:11px;height:1px;background:#5a5a5a"></div>
<div class="t" style="left:249px;top:542px;font-size:14px;font-weight:bold;letter-spacing:-0.5px">11</div>
<div class="t" style="left:266px;top:542px;font-size:8px;font-weight:bold;letter-spacing:0">00</div>
<div class="a" style="left:247px;top:607px;width:29px;height:1px;background:#5a5a5a"></div>
<div class="a" style="left:265px;top:624px;width:11px;height:1px;background:#5a5a5a"></div>
<div class="a" style="left:265px;top:641px;width:11px;height:1px;background:#5a5a5a"></div>
<div class="a" style="left:265px;top:658px;width:11px;height:1px;background:#5a5a5a"></div>
<div class="t" style="left:249px;top:610px;font-size:14px;font-weight:bold;letter-spacing:-0.5px">12</div>
<div class="t" style="left:266px;top:610px;font-size:8px;font-weight:bold;letter-spacing:0">00</div>
<div class="a" style="left:247px;top:675px;width:29px;height:1px;background:#5a5a5a"></div>
<div class="a" style="left:265px;top:692px;width:11px;height:1px;background:#5a5a5a"></div>
<div class="a" style="left:265px;top:709px;width:11px;height:1px;background:#5a5a5a"></div>
<div class="a" style="left:265px;top:726px;width:11px;height:1px;background:#5a5a5a"></div>
<div class="t" style="left:249px;top:678px;font-size:14px;font-weight:bold;letter-spacing:-0.5px">13</div>
<div class="t" style="left:266px;top:678px;font-size:8px;font-weight:bold;letter-spacing:0">00</div>
<div class="a" style="left:247px;top:743px;width:29px;height:1px;background:#5a5a5a"></div>
<div class="a" style="left:1205px;top:230px;width:22px;height:513px;background:#f0f0f0"></div>
<div class="a" style="left:1206px;top:230px;width:1px;height:513px;background:#e6e6e6"></div>
<div class="a" style="left:1218px;top:230px;width:1px;height:513px;background:#e8e8e8"></div>
<div class="a" style="left:1225px;top:201px;width:2px;height:640px;background:#e4e4e4"></div>
<div class="up" style="left:1209px;top:235px;border-width:0 3.5px 4px"></div>
<div class="dn" style="left:1209px;top:735px;border-width:4px 3.5px 0"></div>
<div class="a" style="left:1206px;top:386px;width:12px;height:140px;border:1px solid #a0a0a0;border-radius:2px;background:linear-gradient(90deg,#f4f4f4,#e8e8e8 50%,#cfcfcf)"></div>
<div class="a" style="left:1209px;top:453px;width:5px;height:5px;background:repeating-linear-gradient(#555 0 1px,transparent 1px 2px)"></div>
<div class="a" style="left:244px;top:743px;width:37px;height:18px;background:#f0f0f0;border-right:1px solid #696969;border-bottom:1px solid #696969;text-align:center;padding-top:4px">Rotas</div>
<div class="a" style="left:247px;top:743px;width:30px;height:1px;background:#404040"></div>
<div class="tab" style="left:281px;top:743px;width:64px;height:16px;padding-top:3px">Away periods</div>
<div class="tab" style="left:345px;top:743px;width:60px;height:16px;padding-top:3px">Agreements</div>
<div class="a" style="left:236px;top:813px;width:183px;height:30px;border:1px solid #b8b8b8;border-bottom:none"></div>
<div class="t" style="left:242px;top:808px;background:#f0f0f0;padding:0 1px">Apply the changes to</div>
<svg class="a" style="left:243px;top:822px" width="12" height="12"><circle cx="5.5" cy="5.5" r="4.5" fill="#fff" stroke="#a0a0a0"/><circle cx="5.5" cy="5.5" r="1.6" fill="#000"/></svg>
<div class="t" style="left:258px;top:823px">This week</div>
<svg class="a" style="left:311px;top:822px" width="12" height="12"><circle cx="5.5" cy="5.5" r="4.5" fill="#fff" stroke="#a0a0a0"/></svg>
<div class="t" style="left:327px;top:823px">This week &amp; beyond</div>
<div class="t" style="left:900px;width:299px;text-align:right;top:771px">Historical beyond last week - Planned</div>
<div class="t" style="left:900px;width:299px;text-align:right;top:786px">Rotations: R2 = W2, R3 = W3, R4 = W4</div>
<div class="t" style="left:900px;width:299px;text-align:right;top:800px">F8 multi-select, F9 allocate calls</div>
<div class="a" style="left:945px;top:822px;width:62px;height:18px;background:#f0f0f0;border-top:1px solid #fff;border-left:1px solid #fff;border-right:2px solid #696969;text-align:center;padding-top:4px"><u>L</u>og...</div>
<div class="a" style="left:1012px;top:822px;width:70px;height:18px;background:#f0f0f0;border-top:1px solid #fff;border-left:1px solid #fff;border-right:2px solid #696969;text-align:center;padding-top:4px"><u>R</u>efresh</div>
<div class="a" style="left:1087px;top:822px;width:54px;height:18px;background:#f0f0f0;border-top:1px solid #fff;border-left:1px solid #fff;border-right:2px solid #696969;text-align:center;padding-top:4px"><u>P</u>review</div>
<div class="a" style="left:1163px;top:822px;width:61px;height:18px;background:#f0f0f0;border-top:1px solid #fff;border-left:1px solid #fff;border-right:2px solid #696969;text-align:center;padding-top:4px"><u>C</u>lose</div>
<div class="a" style="left:1141px;top:822px;width:16px;height:18px;background:#f0f0f0;border-top:1px solid #fff;border-right:2px solid #696969"><div class="dn" style="left:3px;top:6px"></div></div>
<div class="a" style="left:3px;top:842px;width:1224px;height:19px;background:#f9f9f9;border-bottom:1px solid #a0a0a0;border-right:1px solid #a0a0a0;border-left:1px solid #a0a0a0"></div>
<div class="a" style="left:4px;top:842px;width:39px;height:17px;background:#f0f0f0;border:1px solid;border-color:#fff #696969 #696969 #fff;text-align:center;padding-top:3px">Rotas</div>
<div class="a" style="left:1202px;top:847px;width:0;height:0;border-top:4px solid transparent;border-bottom:4px solid transparent;border-right:4px solid #c8c8c8"></div><div class="a" style="left:1218px;top:847px;width:0;height:0;border-top:4px solid transparent;border-bottom:4px solid transparent;border-left:4px solid #c8c8c8"></div>
<div class="a" style="left:3px;top:861px;width:1224px;height:21px;background:#f0f0f0;border-bottom:1px solid #8a9aaa"></div>
<div class="sb" style="left:3px;top:863px;width:113px;height:18px;padding-top:3px;">CareFree (Administrator)</div>
<div class="sb" style="left:119px;top:863px;width:60px;height:18px;padding-top:3px;text-align:center;padding-left:0;">Unallocated</div>
<div class="sb" style="left:182px;top:863px;width:26px;height:18px;padding-top:3px;text-align:center;padding-left:0;">181</div>
<div class="sb" style="left:211px;top:863px;width:26px;height:18px;padding-top:3px;text-align:center;padding-left:0;">172</div>
<div class="sb" style="left:240px;top:863px;width:26px;height:18px;padding-top:3px;text-align:center;padding-left:0;">1408</div>
<div class="sb" style="left:268px;top:863px;width:29px;height:18px;padding-top:3px;text-align:center;padding-left:0;">1324</div>
<div class="sb" style="left:297px;top:863px;width:85px;height:18px;padding-top:3px;">563 missed today</div>
<div class="sb" style="left:383px;top:863px;width:84px;height:18px;padding-top:3px;">No new messages</div>
<div class="sb" style="left:468px;top:863px;width:84px;height:18px;padding-top:3px;"></div>
<div class="sb" style="left:554px;top:863px;width:206px;height:18px;padding-top:3px;">Support: 0845 862 0405</div>
<div class="sb" style="left:761px;top:863px;width:182px;height:18px;padding-top:3px;">CareFree Test Version LeeB</div>
<div class="sb" style="left:945px;top:863px;width:182px;height:18px;padding-top:3px;">CAREFREEPC04\carefree</div>
<div class="sb" style="left:1128px;top:863px;width:81px;height:18px;padding-top:3px;">CareFreeTestNew</div>
<svg class="a" style="left:0;top:0" width="1230" height="1000"><defs><filter id="sh" x="-20%" y="-20%" width="140%" height="140%"><feGaussianBlur stdDeviation="2"/></filter></defs><path d="M31,11 H151.5 A21,21 0 0 1 172.5,32 V80 A21,21 0 0 1 151.5,101 H138 L119.5,126 L126,101 H31 A21,21 0 0 1 10,80 V32 A21,21 0 0 1 31,11 Z" transform="translate(4,4.5)" fill="#000" opacity=".55" filter="url(#sh)"/><path d="M267.3,15 H387.9 A21,21 0 0 1 408.9,36 V84 A21,21 0 0 1 387.9,105 H374 L355.2,133.3 L362.5,105 H267.3 A21,21 0 0 1 246.3,84 V36 A21,21 0 0 1 267.3,15 Z" transform="translate(4,4.5)" fill="#000" opacity=".55" filter="url(#sh)"/><path d="M548,43 H668.7 A21,21 0 0 1 689.7,64 V112.30000000000001 A21,21 0 0 1 668.7,133.3 H654.7 L635.2,160 L643.3,133.3 H548 A21,21 0 0 1 527,112.30000000000001 V64 A21,21 0 0 1 548,43 Z" transform="translate(4,4.5)" fill="#000" opacity=".55" filter="url(#sh)"/><path d="M25,889 H88 L76.5,877 L106,889 H129.3 A21,21 0 0 1 150.3,910 V971.8 A21,21 0 0 1 129.3,992.8 H25 A21,21 0 0 1 4,971.8 V910 A21,21 0 0 1 25,889 Z" transform="translate(4,4.5)" fill="#000" opacity=".55" filter="url(#sh)"/><path d="M180.6,891 H176 L163,873 L196,891 H299.6 A21,21 0 0 1 320.6,912 V971.8 A21,21 0 0 1 299.6,992.8 H180.6 A21,21 0 0 1 159.6,971.8 V912 A21,21 0 0 1 180.6,891 Z" transform="translate(4,4.5)" fill="#000" opacity=".55" filter="url(#sh)"/><path d="M354,889 H520.2 A21,21 0 0 1 541.2,910 V973 A21,21 0 0 1 520.2,994 H354 A21,21 0 0 1 333,973 V923.7 L258.2,873.5 L333,914.6 V910 A21,21 0 0 1 354,889 Z" transform="translate(4,4.5)" fill="#000" opacity=".55" filter="url(#sh)"/><path d="M637.5,891.6 H636 L617.3,875 L654,891.6 H756.8 A21,21 0 0 1 777.8,912.6 V973 A21,21 0 0 1 756.8,994 H637.5 A21,21 0 0 1 616.5,973 V912.6 A21,21 0 0 1 637.5,891.6 Z" transform="translate(4,4.5)" fill="#000" opacity=".55" filter="url(#sh)"/><path d="M31,11 H151.5 A21,21 0 0 1 172.5,32 V80 A21,21 0 0 1 151.5,101 H138 L119.5,126 L126,101 H31 A21,21 0 0 1 10,80 V32 A21,21 0 0 1 31,11 Z" fill="#e4f4d8" stroke="#4a86d2" stroke-width="2" stroke-linejoin="miter"/><path d="M267.3,15 H387.9 A21,21 0 0 1 408.9,36 V84 A21,21 0 0 1 387.9,105 H374 L355.2,133.3 L362.5,105 H267.3 A21,21 0 0 1 246.3,84 V36 A21,21 0 0 1 267.3,15 Z" fill="#e4f4d8" stroke="#4a86d2" stroke-width="2" stroke-linejoin="miter"/><path d="M548,43 H668.7 A21,21 0 0 1 689.7,64 V112.30000000000001 A21,21 0 0 1 668.7,133.3 H654.7 L635.2,160 L643.3,133.3 H548 A21,21 0 0 1 527,112.30000000000001 V64 A21,21 0 0 1 548,43 Z" fill="#e4f4d8" stroke="#4a86d2" stroke-width="2" stroke-linejoin="miter"/><path d="M25,889 H88 L76.5,877 L106,889 H129.3 A21,21 0 0 1 150.3,910 V971.8 A21,21 0 0 1 129.3,992.8 H25 A21,21 0 0 1 4,971.8 V910 A21,21 0 0 1 25,889 Z" fill="#e4f4d8" stroke="#4a86d2" stroke-width="2" stroke-linejoin="miter"/><path d="M180.6,891 H176 L163,873 L196,891 H299.6 A21,21 0 0 1 320.6,912 V971.8 A21,21 0 0 1 299.6,992.8 H180.6 A21,21 0 0 1 159.6,971.8 V912 A21,21 0 0 1 180.6,891 Z" fill="#e4f4d8" stroke="#4a86d2" stroke-width="2" stroke-linejoin="miter"/><path d="M354,889 H520.2 A21,21 0 0 1 541.2,910 V973 A21,21 0 0 1 520.2,994 H354 A21,21 0 0 1 333,973 V923.7 L258.2,873.5 L333,914.6 V910 A21,21 0 0 1 354,889 Z" fill="#e4f4d8" stroke="#4a86d2" stroke-width="2" stroke-linejoin="miter"/><path d="M637.5,891.6 H636 L617.3,875 L654,891.6 H756.8 A21,21 0 0 1 777.8,912.6 V973 A21,21 0 0 1 756.8,994 H637.5 A21,21 0 0 1 616.5,973 V912.6 A21,21 0 0 1 637.5,891.6 Z" fill="#e4f4d8" stroke="#4a86d2" stroke-width="2" stroke-linejoin="miter"/></svg><div class="ct" style="left:-19px;width:220px;top:20.72px">The title bar, will<br>always display your<br>current, working<br>screen.</div><div class="ct" style="left:217.5px;width:220px;top:24.72px">The drop down<br>menus contain<br>further options in list<br>form.</div><div class="ct" style="left:498px;width:220px;top:52.32px">The toolbar icons<br>are a quick link to<br>the relevant<br>screens.</div><div class="ct" style="left:-33px;width:220px;top:896.72px">This is the<br>username and<br>role you are<br>currently logged<br>into CareFree as.</div><div class="ct" style="left:130px;width:220px;top:897.22px">Double clicking<br>'Unallocated', allows<br>you to view present<br>and future calls with<br>no carer allocated.</div><div class="ct" style="left:327px;width:220px;top:896.92px">These numbers indicate<br>the number of unallocated<br>calls for today, tomorrow,<br>this week, and next week<br>respectively.</div><div class="ct" style="left:587px;width:220px;top:896.92px">CareFree's support<br>number is shown at<br>the bottom of any<br>screen you are<br>viewing.</div>
</body></html>
